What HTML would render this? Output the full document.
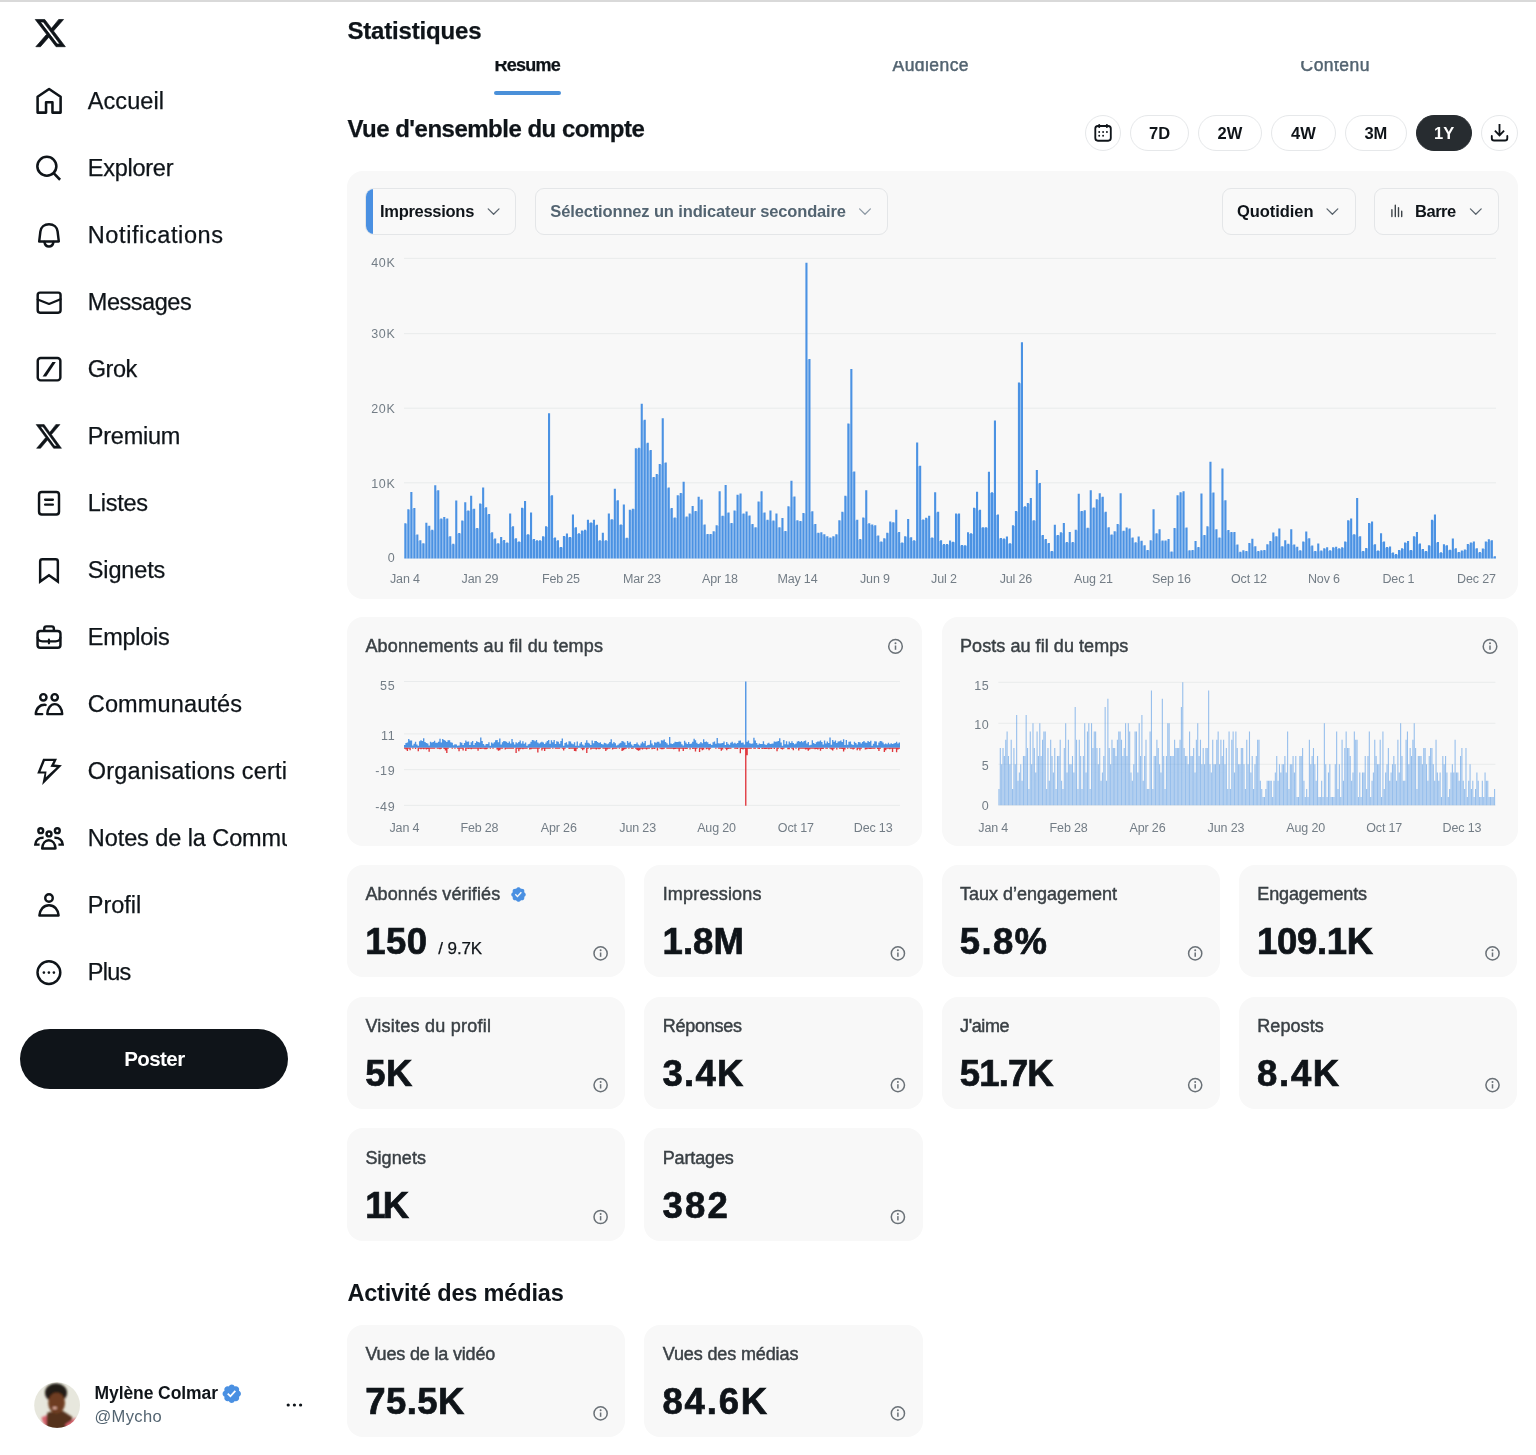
<!DOCTYPE html><html lang="fr"><head><meta charset="utf-8"><title>Statistiques</title><style>
html,body{margin:0;padding:0;background:#fff}
body{width:1536px;height:1455px;position:relative;overflow:hidden;will-change:transform;font-family:"Liberation Sans",sans-serif;color:#0f1419}
.t{position:absolute;white-space:nowrap;line-height:1}
.abs{position:absolute}
.card{position:absolute;background:#f8f8f8;border-radius:16px}
.dd{position:absolute;box-sizing:border-box;border:1px solid #e4e6e8;border-radius:9px;background:#f9f9f9}
.pill{position:absolute;box-sizing:border-box;border:1px solid #e6e8ea;border-radius:18px;background:#fff}
svg{position:absolute;left:0;top:0;overflow:visible}
.m{-webkit-text-stroke:0.45px currentColor}
.h{-webkit-text-stroke:0.7px currentColor}
.n{-webkit-text-stroke:0.25px currentColor}
</style></head><body>
<div class="abs" style="left:0;top:0;width:1536px;height:1.5px;background:#d9d9d9"></div>
<nav>
<div class="t n" style="left:87.80px;top:90.00px;font-size:23.5px;letter-spacing:0.056px;">Accueil</div>
<div class="t n" style="left:87.80px;top:157.00px;font-size:23.5px;letter-spacing:-0.259px;">Explorer</div>
<div class="t n" style="left:87.80px;top:224.00px;font-size:23.5px;letter-spacing:0.600px;">Notifications</div>
<div class="t n" style="left:87.80px;top:291.00px;font-size:23.5px;letter-spacing:-0.459px;">Messages</div>
<div class="t n" style="left:87.80px;top:358.00px;font-size:23.5px;letter-spacing:-0.457px;">Grok</div>
<div class="t n" style="left:87.80px;top:425.00px;font-size:23.5px;letter-spacing:-0.237px;">Premium</div>
<div class="t n" style="left:87.80px;top:492.00px;font-size:23.5px;letter-spacing:-0.216px;">Listes</div>
<div class="t n" style="left:87.80px;top:559.00px;font-size:23.5px;letter-spacing:-0.145px;">Signets</div>
<div class="t n" style="left:87.80px;top:626.00px;font-size:23.5px;letter-spacing:-0.265px;">Emplois</div>
<div class="t n" style="left:87.80px;top:693.00px;font-size:23.5px;letter-spacing:0.138px;">Communautés</div>
<div class="abs" style="left:80px;top:751.0px;width:207.3px;height:40px;overflow:hidden"><div class="t n" style="left:7.80px;top:9.00px;font-size:23.5px;letter-spacing:0.182px;">Organisations certifiées</div></div>
<div class="abs" style="left:80px;top:818.0px;width:207.3px;height:40px;overflow:hidden"><div class="t n" style="left:7.80px;top:9.00px;font-size:23.5px;letter-spacing:-0.080px;">Notes de la Communauté</div></div>
<div class="t n" style="left:87.80px;top:894.00px;font-size:23.5px;letter-spacing:-0.027px;">Profil</div>
<div class="t n" style="left:87.80px;top:961.00px;font-size:23.5px;letter-spacing:-0.769px;">Plus</div>
</nav>
<svg width="340" height="1455" viewBox="0 0 340 1455" fill="none" stroke="#0f1419" stroke-width="2.45" stroke-linejoin="round" stroke-linecap="round"><path transform="translate(33.5 16.35) scale(1.395)" d="M18.244 2.25h3.308l-7.227 8.26 8.502 11.24H16.17l-5.214-6.817L4.99 21.75H1.68l7.73-8.835L1.254 2.25H8.08l4.713 6.231zm-1.161 17.52h1.833L7.084 4.126H5.117z" fill="#0f1419" stroke="#0f1419" stroke-width="0.5" stroke-linejoin="miter"/><path transform="translate(34.65 421.8) scale(1.175 1.22)" d="M18.244 2.25h3.308l-7.227 8.26 8.502 11.24H16.17l-5.214-6.817L4.99 21.75H1.68l7.73-8.835L1.254 2.25H8.08l4.713 6.231zm-1.161 17.52h1.833L7.084 4.126H5.117z" fill="#0f1419" stroke="#0f1419" stroke-width="0.45" stroke-linejoin="miter"/><path stroke-width="2.55" d="M37.6 112.6V96.8L49.1 89 60.6 96.8V112.6H52.45V102.2H46.05V112.6Z"/><circle cx="46.85" cy="166.25" r="9.5" stroke-width="2.55"/><path stroke-width="2.55" stroke-linecap="butt" d="M53.4 172.8L60.1 179.75"/><path d="M39.2 241.4L40.4 231.5C40.9 227 44.4 224.2 49 224.2S57.1 227 57.6 231.5L58.8 241.4Z"/><path d="M44.4 242C44.9 244.8 46.6 246.5 48.95 246.5S53 244.8 53.5 242"/><rect x="37.7" y="292.6" width="22.85" height="20.05" rx="2.3"/><path stroke-width="2.2" d="M37.7 299.4L49.05 304 60.5 299.2"/><rect x="37.75" y="357.95" width="22.6" height="22.4" rx="2.9"/><path fill="#0f1419" stroke="none" d="M42.6 376.4H46.2L55.8 362H52.4Z"/><rect x="39.05" y="492.05" width="19.95" height="22.5" rx="2.7"/><path stroke-width="2.3" d="M45.1 499.75H52.9M45.1 504.7H52.9"/><path stroke-linejoin="miter" stroke-miterlimit="6" d="M40.15 581.6V561.4Q40.15 559.15 42.4 559.15H55.6Q57.85 559.15 57.85 561.4V581.6L49 575.3Z"/><rect x="37.55" y="631.05" width="22.9" height="16.7" rx="2.8"/><path d="M44.25 630.8V628.6Q44.25 626.35 46.5 626.35H51.6Q53.85 626.35 53.85 628.6V630.8"/><path stroke-width="2.2" d="M37.7 637.5Q37.9 641.3 42.5 641.3H55.5Q60.1 641.3 60.3 637.5M48.95 639.7V643.3"/><circle cx="43.35" cy="697.3" r="3.15"/><circle cx="54.7" cy="697.3" r="3.15"/><path d="M47.3 714.1C47.6 708.5 50.5 704.1 54.75 704.1S61.9 708.5 62.2 714.1Z"/><path d="M45.6 704.9C40 704.3 36.2 708 35.8 714.1H42.2"/><path fill="#0f1419" stroke="none" fill-rule="evenodd" d="M43.1 758.7H57L54.3 764.6 61.9 765.3 42.2 785 44.5 773.6H37.2ZM44.8 761.1H53.4L50.4 766.8 56.7 767.2 45.8 777.3 46.5 771.4H40.5Z"/><circle cx="49" cy="833.9" r="2.45"/><circle cx="40.75" cy="830.7" r="2.4"/><circle cx="57.3" cy="830.7" r="2.4"/><path d="M42.2 848.4C42.5 843.6 45.2 840.2 48.85 840.2S55.2 843.6 55.5 848.4Z"/><path stroke-linecap="butt" stroke-linejoin="miter" d="M43.6 837.7C38.6 837.4 35.6 840.4 35.3 844.6H39.6M54.4 837.7C59.4 837.4 62.4 840.4 62.7 844.6H58.4"/><circle cx="49" cy="898.05" r="3.75"/><path d="M39.4 915.45C39.9 909.5 43.6 905.15 49 905.15S58.1 909.5 58.6 915.45Z"/><circle cx="48.9" cy="972.6" r="11.4"/><g fill="#0f1419" stroke="none"><circle cx="43.9" cy="972.6" r="1.3"/><circle cx="48.9" cy="972.6" r="1.3"/><circle cx="53.9" cy="972.6" r="1.3"/></g><g fill="#0f1419" stroke="none"><circle cx="288.2" cy="1405" r="1.6"/><circle cx="294.4" cy="1405" r="1.6"/><circle cx="300.6" cy="1405" r="1.6"/></g></svg>
<div class="abs" style="left:20.3px;top:1029px;width:267.5px;height:59.5px;border-radius:30px;background:#0f1419"></div>
<div class="t" style="left:124.20px;top:1049.00px;font-size:20.5px;font-weight:700;color:#fff;letter-spacing:-0.559px;">Poster</div>
<svg width="60" height="60" viewBox="0 0 60 60" style="left:30px;top:1376px"><defs><clipPath id="av"><circle cx="27.1" cy="29.2" r="22.9"/></clipPath><filter id="bl" x="-20%" y="-20%" width="140%" height="140%"><feGaussianBlur stdDeviation="1"/></filter></defs><g clip-path="url(#av)"><rect x="0" y="0" width="60" height="60" fill="#e7e7dd"/><g filter="url(#bl)"><path d="M17.8 36.3L33 35 42.5 41.2 39.2 53H15.7L16.1 41.2Z" fill="#55301a"/><path d="M11.4 41.6L16.6 39.2V51L13 46.4Z" fill="#d8636e"/><path d="M35.1 48.4L46.4 41.2 44.4 48.4 37.2 53.5Z" fill="#d8636e"/><ellipse cx="26" cy="16.8" rx="11" ry="9.6" fill="#221a12"/><ellipse cx="26.6" cy="27" rx="8.4" ry="10.6" fill="#6e3d20"/><ellipse cx="24.8" cy="32" rx="2.2" ry="1.3" fill="#e6b3a3"/></g></g></svg>
<div class="t" style="left:94.50px;top:1385.00px;font-size:17.5px;font-weight:700;letter-spacing:-0.081px;">Mylène Colmar</div>
<div class="t" style="left:94.50px;top:1408.00px;font-size:16.5px;color:#536471;letter-spacing:0.372px;">@Mycho</div>
<svg width="21.5" height="21.5" viewBox="0 0 24 24" style="left:221.15px;top:1382.65px"><path d="M22.25 12c0-1.43-.88-2.67-2.19-3.34.46-1.39.2-2.9-.81-3.91s-2.52-1.27-3.91-.81c-.66-1.31-1.91-2.19-3.34-2.19s-2.67.88-3.33 2.19c-1.4-.46-2.91-.2-3.92.81s-1.26 2.52-.8 3.91c-1.31.67-2.2 1.91-2.2 3.34s.89 2.67 2.2 3.34c-.46 1.39-.21 2.9.8 3.91s2.52 1.26 3.91.81c.67 1.31 1.91 2.19 3.34 2.19s2.68-.88 3.34-2.19c1.39.45 2.9.2 3.91-.81s1.27-2.52.81-3.91c1.31-.67 2.19-1.91 2.19-3.34zm-11.71 4.2L6.8 12.46l1.41-1.42 2.26 2.26 4.8-5.23 1.47 1.36-6.2 6.77z" fill="#4a90e2"/></svg>
<main>
<div class="t n" style="left:347.40px;top:19.00px;font-size:24px;font-weight:700;letter-spacing:-0.176px;">Statistiques</div>
<div class="abs" style="left:340px;top:60.9px;width:1196px;height:24px;overflow:hidden">
<div class="t n" style="left:154.60px;top:-5.00px;font-size:18px;font-weight:700;letter-spacing:-0.788px;">Résumé</div>
<div class="t m" style="left:552.60px;top:-4.00px;font-size:17.5px;color:#536471;letter-spacing:0.432px;">Audience</div>
<div class="t m" style="left:960.60px;top:-4.00px;font-size:17.5px;color:#536471;letter-spacing:0.439px;">Contenu</div>
</div>
<div class="abs" style="left:494px;top:90.7px;width:67px;height:4.3px;border-radius:3px;background:#4a90d9"></div>
<div class="t n" style="left:347.40px;top:117.00px;font-size:24px;font-weight:700;letter-spacing:-0.499px;">Vue d'ensemble du compte</div>
<div class="pill" style="left:1085.1px;top:114.8px;width:36.3px;height:36.5px;border-radius:19px"></div>
<div class="pill" style="left:1130px;top:114.9px;width:59.0px;height:36.4px;"></div>
<div class="t" style="left:1148.96px;top:125.00px;font-size:16.5px;font-weight:700;">7D</div>
<div class="pill" style="left:1198.3px;top:114.9px;width:63.4px;height:36.4px;"></div>
<div class="t" style="left:1217.62px;top:125.00px;font-size:16.5px;font-weight:700;">2W</div>
<div class="pill" style="left:1271.2px;top:114.9px;width:64.6px;height:36.4px;"></div>
<div class="t" style="left:1291.12px;top:125.00px;font-size:16.5px;font-weight:700;">4W</div>
<div class="pill" style="left:1344.9px;top:114.9px;width:61.9px;height:36.4px;"></div>
<div class="t" style="left:1364.39px;top:125.00px;font-size:16.5px;font-weight:700;">3M</div>
<div class="pill" style="left:1415.9px;top:114.9px;width:56.4px;height:36.4px;background:#272c30;border-color:#272c30;"></div>
<div class="t" style="left:1434.01px;top:125.00px;font-size:16.5px;font-weight:700;color:#fff;">1Y</div>
<div class="pill" style="left:1481.4px;top:114.8px;width:36.3px;height:36.5px;border-radius:19px"></div>
<svg width="1536" height="300" viewBox="0 0 1536 300" fill="none" stroke="#0f1419" stroke-width="1.85" stroke-linejoin="round" stroke-linecap="round"><rect x="1095.3" y="126" width="15.5" height="14.7" rx="2.6"/><path stroke-width="2" d="M1099.2 124.9V127M1106.9 124.9V127"/><g fill="#0f1419" stroke="none"><circle cx="1099.2" cy="132" r="0.95"/><circle cx="1103.1" cy="132" r="0.95"/><circle cx="1106.9" cy="132" r="0.95"/><circle cx="1099.2" cy="135.8" r="0.95"/><circle cx="1103.1" cy="135.8" r="0.95"/></g><path stroke-linecap="butt" stroke-linejoin="miter" d="M1499.5 124V135M1494.9 130.7L1499.5 135.4 1504.1 130.7"/><path d="M1491.8 136V138.2Q1491.8 140.5 1494.1 140.5H1505Q1507.3 140.5 1507.3 138.2V136"/></svg>
<div class="card" style="left:347px;top:170.5px;width:1171px;height:428px"></div>
<div class="dd" style="left:365.2px;top:188.2px;width:151.2px;height:46.4px;overflow:hidden"><div class="abs" style="left:-1px;top:-1px;width:8.2px;height:49px;background:#4a90e2"></div></div>
<div class="t" style="left:380.00px;top:203.00px;font-size:16.5px;font-weight:700;letter-spacing:-0.290px;">Impressions</div>
<svg width="1536" height="300" viewBox="0 0 1536 300" fill="none" stroke="#59636c" stroke-width="1.25" stroke-linecap="round" stroke-linejoin="round"><path d="M488.20000000000005 208.9L493.6 214.3 499.0 208.9"/></svg>
<div class="dd" style="left:535.4px;top:188.2px;width:352.9px;height:46.4px;overflow:hidden"></div>
<div class="t" style="left:550.30px;top:203.00px;font-size:16.5px;font-weight:700;color:#536471;letter-spacing:-0.140px;">Sélectionnez un indicateur secondaire</div>
<svg width="1536" height="300" viewBox="0 0 1536 300" fill="none" stroke="#8d99a4" stroke-width="1.25" stroke-linecap="round" stroke-linejoin="round"><path d="M859.6 208.9L865 214.3 870.4 208.9"/></svg>
<div class="dd" style="left:1222.3px;top:188.2px;width:133.7px;height:46.4px;overflow:hidden"></div>
<div class="t" style="left:1236.90px;top:203.00px;font-size:16.5px;font-weight:700;letter-spacing:-0.036px;">Quotidien</div>
<svg width="1536" height="300" viewBox="0 0 1536 300" fill="none" stroke="#59636c" stroke-width="1.25" stroke-linecap="round" stroke-linejoin="round"><path d="M1327.0 208.9L1332.4 214.3 1337.8000000000002 208.9"/></svg>
<div class="dd" style="left:1374.3px;top:188.2px;width:124.4px;height:46.4px;overflow:hidden"></div>
<div class="t" style="left:1415.00px;top:203.00px;font-size:16.5px;font-weight:700;letter-spacing:-0.479px;">Barre</div>
<svg width="1536" height="300" viewBox="0 0 1536 300" fill="none" stroke="#59636c" stroke-width="1.25" stroke-linecap="round" stroke-linejoin="round"><path d="M1470.3999999999999 208.9L1475.8 214.3 1481.2 208.9"/></svg>
<svg width="1536" height="300" viewBox="0 0 1536 300" fill="none" stroke="#3e4449" stroke-width="1.4" stroke-linecap="round"><path d="M1391.9 209.8V216.5M1395.3 205.2V216.5M1398.5 207.7V216.5M1401.7 211.2V216.5"/></svg>
<svg width="1536" height="1455" viewBox="0 0 1536 1455"><rect x="404" y="257.9" width="1092" height="1" fill="#e9ebec"/><rect x="404" y="333.1" width="1092" height="1" fill="#e9ebec"/><rect x="404" y="407.7" width="1092" height="1" fill="#e9ebec"/><rect x="404" y="482.3" width="1092" height="1" fill="#e9ebec"/><rect x="404" y="557.3" width="1092" height="1" fill="#e9ebec"/><path d="M406.4 558.4V523.9h0.9V558.4zM409.4 558.4V509.9h0.9V558.4zM412.4 558.4V508.7h0.9V558.4zM415.4 558.4V535.1h0.9V558.4zM418.4 558.4V540.9h0.9V558.4zM421.4 558.4V543.8h0.9V558.4zM424.4 558.4V543.8h0.9V558.4zM427.4 558.4V526.3h0.9V558.4zM430.3 558.4V530.4h0.9V558.4zM433.3 558.4V530.4h0.9V558.4zM436.3 558.4V490.8h0.9V558.4zM439.3 558.4V519.2h0.9V558.4zM442.3 558.4V519.2h0.9V558.4zM445.3 558.4V519.2h0.9V558.4zM448.3 558.4V536.8h0.9V558.4zM451.3 558.4V544.4h0.9V558.4zM454.3 558.4V544.4h0.9V558.4zM457.3 558.4V533.7h0.9V558.4zM460.3 558.4V533.7h0.9V558.4zM463.3 558.4V521.0h0.9V558.4zM466.3 558.4V511.0h0.9V558.4zM469.3 558.4V511.0h0.9V558.4zM472.2 558.4V509.3h0.9V558.4zM475.2 558.4V528.6h0.9V558.4zM478.2 558.4V528.6h0.9V558.4zM481.2 558.4V504.0h0.9V558.4zM484.2 558.4V507.9h0.9V558.4zM487.2 558.4V514.5h0.9V558.4zM490.2 558.4V532.9h0.9V558.4zM493.2 558.4V539.2h0.9V558.4zM496.2 558.4V543.8h0.9V558.4zM499.2 558.4V543.8h0.9V558.4zM502.2 558.4V540.7h0.9V558.4zM505.2 558.4V543.0h0.9V558.4zM508.2 558.4V543.0h0.9V558.4zM511.2 558.4V526.9h0.9V558.4zM514.1 558.4V538.8h0.9V558.4zM517.1 558.4V542.1h0.9V558.4zM520.1 558.4V542.1h0.9V558.4zM523.1 558.4V508.3h0.9V558.4zM526.1 558.4V534.8h0.9V558.4zM529.1 558.4V534.8h0.9V558.4zM532.1 558.4V539.5h0.9V558.4zM535.1 558.4V540.9h0.9V558.4zM538.1 558.4V540.9h0.9V558.4zM541.1 558.4V540.9h0.9V558.4zM544.1 558.4V536.8h0.9V558.4zM547.1 558.4V526.9h0.9V558.4zM550.1 558.4V495.8h0.9V558.4zM553.1 558.4V538.0h0.9V558.4zM556.1 558.4V540.9h0.9V558.4zM559.0 558.4V547.6h0.9V558.4zM562.0 558.4V547.6h0.9V558.4zM565.0 558.4V536.6h0.9V558.4zM568.0 558.4V537.6h0.9V558.4zM571.0 558.4V537.6h0.9V558.4zM574.0 558.4V527.8h0.9V558.4zM577.0 558.4V533.9h0.9V558.4zM580.0 558.4V533.9h0.9V558.4zM583.0 558.4V531.0h0.9V558.4zM586.0 558.4V530.4h0.9V558.4zM589.0 558.4V523.1h0.9V558.4zM592.0 558.4V523.1h0.9V558.4zM595.0 558.4V525.4h0.9V558.4zM598.0 558.4V540.9h0.9V558.4zM600.9 558.4V540.9h0.9V558.4zM603.9 558.4V540.9h0.9V558.4zM606.9 558.4V540.9h0.9V558.4zM609.9 558.4V519.8h0.9V558.4zM612.9 558.4V519.8h0.9V558.4zM615.9 558.4V500.8h0.9V558.4zM618.9 558.4V525.1h0.9V558.4zM621.9 558.4V525.1h0.9V558.4zM624.9 558.4V538.3h0.9V558.4zM627.9 558.4V538.3h0.9V558.4zM630.9 558.4V510.4h0.9V558.4zM633.9 558.4V509.3h0.9V558.4zM636.9 558.4V448.9h0.9V558.4zM639.9 558.4V448.3h0.9V558.4zM642.8 558.4V420.4h0.9V558.4zM645.8 558.4V443.4h0.9V558.4zM648.8 558.4V450.7h0.9V558.4zM651.8 558.4V477.6h0.9V558.4zM654.8 558.4V477.6h0.9V558.4zM657.8 558.4V474.7h0.9V558.4zM660.8 558.4V464.7h0.9V558.4zM663.8 558.4V463.0h0.9V558.4zM666.8 558.4V488.2h0.9V558.4zM669.8 558.4V508.7h0.9V558.4zM672.8 558.4V518.1h0.9V558.4zM675.8 558.4V518.1h0.9V558.4zM678.8 558.4V495.8h0.9V558.4zM681.8 558.4V493.5h0.9V558.4zM684.7 558.4V517.2h0.9V558.4zM687.7 558.4V517.2h0.9V558.4zM690.7 558.4V514.2h0.9V558.4zM693.7 558.4V511.6h0.9V558.4zM696.7 558.4V511.6h0.9V558.4zM699.7 558.4V500.1h0.9V558.4zM702.7 558.4V525.1h0.9V558.4zM705.7 558.4V534.5h0.9V558.4zM708.7 558.4V534.5h0.9V558.4zM711.7 558.4V534.5h0.9V558.4zM714.7 558.4V531.8h0.9V558.4zM717.7 558.4V525.9h0.9V558.4zM720.7 558.4V516.3h0.9V558.4zM723.7 558.4V516.3h0.9V558.4zM726.7 558.4V513.1h0.9V558.4zM729.6 558.4V523.6h0.9V558.4zM732.6 558.4V523.6h0.9V558.4zM735.6 558.4V511.0h0.9V558.4zM738.6 558.4V495.4h0.9V558.4zM741.6 558.4V514.0h0.9V558.4zM744.6 558.4V514.0h0.9V558.4zM747.6 558.4V516.1h0.9V558.4zM750.6 558.4V524.5h0.9V558.4zM753.6 558.4V527.8h0.9V558.4zM756.6 558.4V527.8h0.9V558.4zM759.6 558.4V502.0h0.9V558.4zM762.6 558.4V513.1h0.9V558.4zM765.6 558.4V520.4h0.9V558.4zM768.6 558.4V520.4h0.9V558.4zM771.5 558.4V521.2h0.9V558.4zM774.5 558.4V521.2h0.9V558.4zM777.5 558.4V527.8h0.9V558.4zM780.5 558.4V527.8h0.9V558.4zM783.5 558.4V531.5h0.9V558.4zM786.5 558.4V531.5h0.9V558.4zM789.5 558.4V506.9h0.9V558.4zM792.5 558.4V497.0h0.9V558.4zM795.5 558.4V520.8h0.9V558.4zM798.5 558.4V521.6h0.9V558.4zM801.5 558.4V521.6h0.9V558.4zM804.5 558.4V513.7h0.9V558.4zM807.5 558.4V359.7h0.9V558.4zM810.5 558.4V511.9h0.9V558.4zM813.4 558.4V524.5h0.9V558.4zM816.4 558.4V533.3h0.9V558.4zM819.4 558.4V533.3h0.9V558.4zM822.4 558.4V534.8h0.9V558.4zM825.4 558.4V536.8h0.9V558.4zM828.4 558.4V538.0h0.9V558.4zM831.4 558.4V538.0h0.9V558.4zM834.4 558.4V536.8h0.9V558.4zM837.4 558.4V534.8h0.9V558.4zM840.4 558.4V520.8h0.9V558.4zM843.4 558.4V512.4h0.9V558.4zM846.4 558.4V496.4h0.9V558.4zM849.4 558.4V424.1h0.9V558.4zM852.4 558.4V472.0h0.9V558.4zM855.4 558.4V520.4h0.9V558.4zM858.3 558.4V539.7h0.9V558.4zM861.3 558.4V539.7h0.9V558.4zM864.3 558.4V518.1h0.9V558.4zM867.3 558.4V523.9h0.9V558.4zM870.3 558.4V525.1h0.9V558.4zM873.3 558.4V525.9h0.9V558.4zM876.3 558.4V536.0h0.9V558.4zM879.3 558.4V542.1h0.9V558.4zM882.3 558.4V542.1h0.9V558.4zM885.3 558.4V538.8h0.9V558.4zM888.3 558.4V533.3h0.9V558.4zM891.3 558.4V522.8h0.9V558.4zM894.3 558.4V522.8h0.9V558.4zM897.3 558.4V532.7h0.9V558.4zM900.2 558.4V543.0h0.9V558.4zM903.2 558.4V543.0h0.9V558.4zM906.2 558.4V536.8h0.9V558.4zM909.2 558.4V537.8h0.9V558.4zM912.2 558.4V540.9h0.9V558.4zM915.2 558.4V540.9h0.9V558.4zM918.2 558.4V466.3h0.9V558.4zM921.2 558.4V520.1h0.9V558.4zM924.2 558.4V520.1h0.9V558.4zM927.2 558.4V518.4h0.9V558.4zM930.2 558.4V538.0h0.9V558.4zM933.2 558.4V538.0h0.9V558.4zM936.2 558.4V512.4h0.9V558.4zM939.2 558.4V540.9h0.9V558.4zM942.1 558.4V544.7h0.9V558.4zM945.1 558.4V544.7h0.9V558.4zM948.1 558.4V544.7h0.9V558.4zM951.1 558.4V542.3h0.9V558.4zM954.1 558.4V542.3h0.9V558.4zM957.1 558.4V514.2h0.9V558.4zM960.1 558.4V545.6h0.9V558.4zM963.1 558.4V545.8h0.9V558.4zM966.1 558.4V545.8h0.9V558.4zM969.1 558.4V533.9h0.9V558.4zM972.1 558.4V533.9h0.9V558.4zM975.1 558.4V508.3h0.9V558.4zM978.1 558.4V510.4h0.9V558.4zM981.1 558.4V527.8h0.9V558.4zM984.0 558.4V527.8h0.9V558.4zM987.0 558.4V527.8h0.9V558.4zM990.0 558.4V492.9h0.9V558.4zM993.0 558.4V492.9h0.9V558.4zM996.0 558.4V515.1h0.9V558.4zM999.0 558.4V538.6h0.9V558.4zM1002.0 558.4V539.2h0.9V558.4zM1005.0 558.4V539.2h0.9V558.4zM1008.0 558.4V543.8h0.9V558.4zM1011.0 558.4V543.8h0.9V558.4zM1014.0 558.4V525.9h0.9V558.4zM1017.0 558.4V511.6h0.9V558.4zM1020.0 558.4V383.2h0.9V558.4zM1023.0 558.4V506.9h0.9V558.4zM1026.0 558.4V506.9h0.9V558.4zM1028.9 558.4V503.7h0.9V558.4zM1031.9 558.4V520.8h0.9V558.4zM1034.9 558.4V520.8h0.9V558.4zM1037.9 558.4V483.7h0.9V558.4zM1040.9 558.4V535.6h0.9V558.4zM1043.9 558.4V539.5h0.9V558.4zM1046.9 558.4V543.5h0.9V558.4zM1049.9 558.4V551.5h0.9V558.4zM1052.9 558.4V551.5h0.9V558.4zM1055.9 558.4V535.6h0.9V558.4zM1058.9 558.4V535.6h0.9V558.4zM1061.9 558.4V532.9h0.9V558.4zM1064.9 558.4V542.7h0.9V558.4zM1067.9 558.4V542.7h0.9V558.4zM1070.8 558.4V542.7h0.9V558.4zM1073.8 558.4V542.7h0.9V558.4zM1076.8 558.4V530.4h0.9V558.4zM1079.8 558.4V511.6h0.9V558.4zM1082.8 558.4V511.6h0.9V558.4zM1085.8 558.4V528.3h0.9V558.4zM1088.8 558.4V528.3h0.9V558.4zM1091.8 558.4V508.1h0.9V558.4zM1094.8 558.4V508.1h0.9V558.4zM1097.8 558.4V499.9h0.9V558.4zM1100.8 558.4V497.3h0.9V558.4zM1103.8 558.4V512.4h0.9V558.4zM1106.8 558.4V527.8h0.9V558.4zM1109.8 558.4V535.1h0.9V558.4zM1112.7 558.4V535.1h0.9V558.4zM1115.7 558.4V531.8h0.9V558.4zM1118.7 558.4V524.7h0.9V558.4zM1121.7 558.4V531.3h0.9V558.4zM1124.7 558.4V531.3h0.9V558.4zM1127.7 558.4V529.2h0.9V558.4zM1130.7 558.4V538.0h0.9V558.4zM1133.7 558.4V542.9h0.9V558.4zM1136.7 558.4V542.9h0.9V558.4zM1139.7 558.4V541.3h0.9V558.4zM1142.7 558.4V545.8h0.9V558.4zM1145.7 558.4V550.5h0.9V558.4zM1148.7 558.4V550.5h0.9V558.4zM1151.7 558.4V540.9h0.9V558.4zM1154.6 558.4V533.9h0.9V558.4zM1157.6 558.4V533.9h0.9V558.4zM1160.6 558.4V541.2h0.9V558.4zM1163.6 558.4V541.2h0.9V558.4zM1166.6 558.4V541.2h0.9V558.4zM1169.6 558.4V552.1h0.9V558.4zM1172.6 558.4V552.1h0.9V558.4zM1175.6 558.4V528.6h0.9V558.4zM1178.6 558.4V495.8h0.9V558.4zM1181.6 558.4V492.9h0.9V558.4zM1184.6 558.4V528.0h0.9V558.4zM1187.6 558.4V550.9h0.9V558.4zM1190.6 558.4V550.9h0.9V558.4zM1193.6 558.4V550.5h0.9V558.4zM1196.6 558.4V547.7h0.9V558.4zM1199.5 558.4V547.7h0.9V558.4zM1202.5 558.4V535.6h0.9V558.4zM1205.5 558.4V535.6h0.9V558.4zM1208.5 558.4V526.9h0.9V558.4zM1211.5 558.4V493.1h0.9V558.4zM1214.5 558.4V529.8h0.9V558.4zM1217.5 558.4V538.0h0.9V558.4zM1220.5 558.4V538.0h0.9V558.4zM1223.5 558.4V500.8h0.9V558.4zM1226.5 558.4V530.7h0.9V558.4zM1229.5 558.4V532.7h0.9V558.4zM1232.5 558.4V532.7h0.9V558.4zM1235.5 558.4V545.0h0.9V558.4zM1238.5 558.4V552.4h0.9V558.4zM1241.4 558.4V552.4h0.9V558.4zM1244.4 558.4V551.5h0.9V558.4zM1247.4 558.4V551.5h0.9V558.4zM1250.4 558.4V543.5h0.9V558.4zM1253.4 558.4V546.8h0.9V558.4zM1256.4 558.4V551.7h0.9V558.4zM1259.4 558.4V551.7h0.9V558.4zM1262.4 558.4V550.9h0.9V558.4zM1265.4 558.4V550.5h0.9V558.4zM1268.4 558.4V544.8h0.9V558.4zM1271.4 558.4V541.7h0.9V558.4zM1274.4 558.4V536.8h0.9V558.4zM1277.4 558.4V536.8h0.9V558.4zM1280.4 558.4V546.8h0.9V558.4zM1283.3 558.4V546.8h0.9V558.4zM1286.3 558.4V544.4h0.9V558.4zM1289.3 558.4V544.4h0.9V558.4zM1292.3 558.4V545.0h0.9V558.4zM1295.3 558.4V547.4h0.9V558.4zM1298.3 558.4V550.9h0.9V558.4zM1301.3 558.4V550.9h0.9V558.4zM1304.3 558.4V542.1h0.9V558.4zM1307.3 558.4V538.8h0.9V558.4zM1310.3 558.4V546.2h0.9V558.4zM1313.3 558.4V551.5h0.9V558.4zM1316.3 558.4V551.5h0.9V558.4zM1319.3 558.4V551.2h0.9V558.4zM1322.3 558.4V551.2h0.9V558.4zM1325.3 558.4V548.9h0.9V558.4zM1328.2 558.4V550.9h0.9V558.4zM1331.2 558.4V550.9h0.9V558.4zM1334.2 558.4V547.9h0.9V558.4zM1337.2 558.4V548.9h0.9V558.4zM1340.2 558.4V548.9h0.9V558.4zM1343.2 558.4V547.9h0.9V558.4zM1346.2 558.4V542.1h0.9V558.4zM1349.2 558.4V520.8h0.9V558.4zM1352.2 558.4V534.8h0.9V558.4zM1355.2 558.4V534.8h0.9V558.4zM1358.2 558.4V536.8h0.9V558.4zM1361.2 558.4V551.5h0.9V558.4zM1364.2 558.4V551.5h0.9V558.4zM1367.2 558.4V548.5h0.9V558.4zM1370.1 558.4V523.6h0.9V558.4zM1373.1 558.4V544.8h0.9V558.4zM1376.1 558.4V551.1h0.9V558.4zM1379.1 558.4V551.1h0.9V558.4zM1382.1 558.4V542.1h0.9V558.4zM1385.1 558.4V547.7h0.9V558.4zM1388.1 558.4V547.7h0.9V558.4zM1391.1 558.4V553.0h0.9V558.4zM1394.1 558.4V554.7h0.9V558.4zM1397.1 558.4V554.7h0.9V558.4zM1400.1 558.4V550.5h0.9V558.4zM1403.1 558.4V548.9h0.9V558.4zM1406.1 558.4V543.0h0.9V558.4zM1409.1 558.4V550.5h0.9V558.4zM1412.0 558.4V550.5h0.9V558.4zM1415.0 558.4V536.8h0.9V558.4zM1418.0 558.4V544.2h0.9V558.4zM1421.0 558.4V549.5h0.9V558.4zM1424.0 558.4V551.5h0.9V558.4zM1427.0 558.4V551.5h0.9V558.4zM1430.0 558.4V545.8h0.9V558.4zM1433.0 558.4V520.4h0.9V558.4zM1436.0 558.4V542.7h0.9V558.4zM1439.0 558.4V552.9h0.9V558.4zM1442.0 558.4V552.9h0.9V558.4zM1445.0 558.4V545.8h0.9V558.4zM1448.0 558.4V550.3h0.9V558.4zM1451.0 558.4V550.3h0.9V558.4zM1453.9 558.4V548.9h0.9V558.4zM1456.9 558.4V552.6h0.9V558.4zM1459.9 558.4V552.6h0.9V558.4zM1462.9 558.4V551.1h0.9V558.4zM1465.9 558.4V550.1h0.9V558.4zM1468.9 558.4V544.7h0.9V558.4zM1471.9 558.4V543.1h0.9V558.4zM1474.9 558.4V548.8h0.9V558.4zM1477.9 558.4V552.7h0.9V558.4zM1480.9 558.4V552.7h0.9V558.4zM1483.9 558.4V549.0h0.9V558.4zM1486.9 558.4V542.1h0.9V558.4zM1489.9 558.4V540.8h0.9V558.4zM1492.9 558.4V556.8h0.9V558.4z" fill="#8dbbf0"/><path d="M404.3 558.4V523.3h2.1V558.4zM407.3 558.4V509.3h2.1V558.4zM410.3 558.4V492.0h2.1V558.4zM413.3 558.4V508.1h2.1V558.4zM416.3 558.4V534.5h2.1V558.4zM419.3 558.4V540.3h2.1V558.4zM422.3 558.4V543.2h2.1V558.4zM425.3 558.4V522.7h2.1V558.4zM428.2 558.4V525.7h2.1V558.4zM431.2 558.4V529.8h2.1V558.4zM434.2 558.4V485.2h2.1V558.4zM437.2 558.4V490.2h2.1V558.4zM440.2 558.4V518.6h2.1V558.4zM443.2 558.4V517.1h2.1V558.4zM446.2 558.4V518.6h2.1V558.4zM449.2 558.4V536.2h2.1V558.4zM452.2 558.4V543.8h2.1V558.4zM455.2 558.4V500.5h2.1V558.4zM458.2 558.4V533.1h2.1V558.4zM461.2 558.4V520.4h2.1V558.4zM464.2 558.4V502.2h2.1V558.4zM467.2 558.4V510.4h2.1V558.4zM470.1 558.4V495.8h2.1V558.4zM473.1 558.4V508.7h2.1V558.4zM476.1 558.4V528.0h2.1V558.4zM479.1 558.4V503.4h2.1V558.4zM482.1 558.4V487.6h2.1V558.4zM485.1 558.4V507.3h2.1V558.4zM488.1 558.4V513.9h2.1V558.4zM491.1 558.4V532.3h2.1V558.4zM494.1 558.4V538.6h2.1V558.4zM497.1 558.4V543.2h2.1V558.4zM500.1 558.4V537.0h2.1V558.4zM503.1 558.4V540.1h2.1V558.4zM506.1 558.4V542.4h2.1V558.4zM509.1 558.4V513.4h2.1V558.4zM512.0 558.4V526.3h2.1V558.4zM515.0 558.4V538.2h2.1V558.4zM518.0 558.4V541.5h2.1V558.4zM521.0 558.4V507.7h2.1V558.4zM524.0 558.4V501.1h2.1V558.4zM527.0 558.4V534.2h2.1V558.4zM530.0 558.4V512.5h2.1V558.4zM533.0 558.4V538.9h2.1V558.4zM536.0 558.4V540.3h2.1V558.4zM539.0 558.4V540.3h2.1V558.4zM542.0 558.4V536.2h2.1V558.4zM545.0 558.4V526.3h2.1V558.4zM548.0 558.4V413.2h2.1V558.4zM551.0 558.4V495.2h2.1V558.4zM554.0 558.4V537.4h2.1V558.4zM556.9 558.4V540.3h2.1V558.4zM559.9 558.4V547.0h2.1V558.4zM562.9 558.4V536.0h2.1V558.4zM565.9 558.4V533.5h2.1V558.4zM568.9 558.4V537.0h2.1V558.4zM571.9 558.4V514.5h2.1V558.4zM574.9 558.4V527.2h2.1V558.4zM577.9 558.4V533.3h2.1V558.4zM580.9 558.4V530.4h2.1V558.4zM583.9 558.4V529.8h2.1V558.4zM586.9 558.4V519.8h2.1V558.4zM589.9 558.4V522.5h2.1V558.4zM592.9 558.4V519.8h2.1V558.4zM595.9 558.4V524.8h2.1V558.4zM598.8 558.4V540.3h2.1V558.4zM601.8 558.4V532.7h2.1V558.4zM604.8 558.4V540.3h2.1V558.4zM607.8 558.4V513.4h2.1V558.4zM610.8 558.4V519.2h2.1V558.4zM613.8 558.4V488.8h2.1V558.4zM616.8 558.4V500.2h2.1V558.4zM619.8 558.4V524.5h2.1V558.4zM622.8 558.4V504.6h2.1V558.4zM625.8 558.4V537.7h2.1V558.4zM628.8 558.4V509.8h2.1V558.4zM631.8 558.4V508.7h2.1V558.4zM634.8 558.4V448.3h2.1V558.4zM637.8 558.4V447.7h2.1V558.4zM640.7 558.4V403.8h2.1V558.4zM643.7 558.4V419.8h2.1V558.4zM646.7 558.4V442.8h2.1V558.4zM649.7 558.4V450.1h2.1V558.4zM652.7 558.4V477.0h2.1V558.4zM655.7 558.4V474.1h2.1V558.4zM658.7 558.4V464.1h2.1V558.4zM661.7 558.4V418.2h2.1V558.4zM664.7 558.4V462.4h2.1V558.4zM667.7 558.4V487.6h2.1V558.4zM670.7 558.4V508.1h2.1V558.4zM673.7 558.4V517.5h2.1V558.4zM676.7 558.4V495.2h2.1V558.4zM679.7 558.4V492.9h2.1V558.4zM682.6 558.4V481.7h2.1V558.4zM685.6 558.4V516.6h2.1V558.4zM688.6 558.4V513.6h2.1V558.4zM691.6 558.4V506.1h2.1V558.4zM694.6 558.4V511.0h2.1V558.4zM697.6 558.4V496.7h2.1V558.4zM700.6 558.4V499.5h2.1V558.4zM703.6 558.4V524.5h2.1V558.4zM706.6 558.4V533.9h2.1V558.4zM709.6 558.4V533.9h2.1V558.4zM712.6 558.4V531.2h2.1V558.4zM715.6 558.4V525.3h2.1V558.4zM718.6 558.4V491.3h2.1V558.4zM721.6 558.4V515.7h2.1V558.4zM724.6 558.4V485.0h2.1V558.4zM727.5 558.4V512.5h2.1V558.4zM730.5 558.4V523.0h2.1V558.4zM733.5 558.4V510.4h2.1V558.4zM736.5 558.4V494.8h2.1V558.4zM739.5 558.4V493.4h2.1V558.4zM742.5 558.4V513.4h2.1V558.4zM745.5 558.4V511.6h2.1V558.4zM748.5 558.4V515.5h2.1V558.4zM751.5 558.4V523.9h2.1V558.4zM754.5 558.4V527.2h2.1V558.4zM757.5 558.4V501.4h2.1V558.4zM760.5 558.4V491.3h2.1V558.4zM763.5 558.4V512.5h2.1V558.4zM766.5 558.4V519.8h2.1V558.4zM769.4 558.4V510.4h2.1V558.4zM772.4 558.4V520.6h2.1V558.4zM775.4 558.4V513.6h2.1V558.4zM778.4 558.4V527.2h2.1V558.4zM781.4 558.4V518.1h2.1V558.4zM784.4 558.4V530.9h2.1V558.4zM787.4 558.4V506.3h2.1V558.4zM790.4 558.4V480.8h2.1V558.4zM793.4 558.4V496.4h2.1V558.4zM796.4 558.4V520.2h2.1V558.4zM799.4 558.4V521.0h2.1V558.4zM802.4 558.4V513.1h2.1V558.4zM805.4 558.4V262.7h2.1V558.4zM808.4 558.4V359.1h2.1V558.4zM811.3 558.4V511.3h2.1V558.4zM814.3 558.4V523.9h2.1V558.4zM817.3 558.4V532.7h2.1V558.4zM820.3 558.4V532.3h2.1V558.4zM823.3 558.4V534.2h2.1V558.4zM826.3 558.4V536.2h2.1V558.4zM829.3 558.4V537.4h2.1V558.4zM832.3 558.4V536.2h2.1V558.4zM835.3 558.4V534.2h2.1V558.4zM838.3 558.4V520.2h2.1V558.4zM841.3 558.4V511.8h2.1V558.4zM844.3 558.4V495.8h2.1V558.4zM847.3 558.4V423.5h2.1V558.4zM850.3 558.4V368.9h2.1V558.4zM853.2 558.4V471.4h2.1V558.4zM856.2 558.4V519.8h2.1V558.4zM859.2 558.4V539.1h2.1V558.4zM862.2 558.4V517.5h2.1V558.4zM865.2 558.4V490.2h2.1V558.4zM868.2 558.4V523.3h2.1V558.4zM871.2 558.4V524.5h2.1V558.4zM874.2 558.4V525.3h2.1V558.4zM877.2 558.4V535.4h2.1V558.4zM880.2 558.4V541.5h2.1V558.4zM883.2 558.4V538.2h2.1V558.4zM886.2 558.4V532.7h2.1V558.4zM889.2 558.4V521.6h2.1V558.4zM892.2 558.4V522.2h2.1V558.4zM895.2 558.4V509.8h2.1V558.4zM898.1 558.4V532.1h2.1V558.4zM901.1 558.4V542.4h2.1V558.4zM904.1 558.4V536.2h2.1V558.4zM907.1 558.4V518.9h2.1V558.4zM910.1 558.4V537.2h2.1V558.4zM913.1 558.4V540.3h2.1V558.4zM916.1 558.4V442.5h2.1V558.4zM919.1 558.4V465.7h2.1V558.4zM922.1 558.4V519.5h2.1V558.4zM925.1 558.4V517.8h2.1V558.4zM928.1 558.4V515.7h2.1V558.4zM931.1 558.4V537.4h2.1V558.4zM934.1 558.4V492.3h2.1V558.4zM937.1 558.4V511.8h2.1V558.4zM940.0 558.4V540.3h2.1V558.4zM943.0 558.4V544.1h2.1V558.4zM946.0 558.4V544.1h2.1V558.4zM949.0 558.4V540.6h2.1V558.4zM952.0 558.4V541.7h2.1V558.4zM955.0 558.4V513.6h2.1V558.4zM958.0 558.4V513.6h2.1V558.4zM961.0 558.4V545.0h2.1V558.4zM964.0 558.4V545.2h2.1V558.4zM967.0 558.4V532.3h2.1V558.4zM970.0 558.4V533.3h2.1V558.4zM973.0 558.4V507.7h2.1V558.4zM976.0 558.4V491.7h2.1V558.4zM979.0 558.4V509.8h2.1V558.4zM981.9 558.4V527.2h2.1V558.4zM984.9 558.4V527.2h2.1V558.4zM987.9 558.4V471.8h2.1V558.4zM990.9 558.4V492.3h2.1V558.4zM993.9 558.4V420.5h2.1V558.4zM996.9 558.4V514.5h2.1V558.4zM999.9 558.4V538.0h2.1V558.4zM1002.9 558.4V538.6h2.1V558.4zM1005.9 558.4V536.5h2.1V558.4zM1008.9 558.4V543.2h2.1V558.4zM1011.9 558.4V525.3h2.1V558.4zM1014.9 558.4V511.0h2.1V558.4zM1017.9 558.4V382.6h2.1V558.4zM1020.9 558.4V342.3h2.1V558.4zM1023.9 558.4V506.3h2.1V558.4zM1026.8 558.4V503.1h2.1V558.4zM1029.8 558.4V498.1h2.1V558.4zM1032.8 558.4V520.2h2.1V558.4zM1035.8 558.4V470.0h2.1V558.4zM1038.8 558.4V483.1h2.1V558.4zM1041.8 558.4V535.0h2.1V558.4zM1044.8 558.4V538.9h2.1V558.4zM1047.8 558.4V542.9h2.1V558.4zM1050.8 558.4V550.9h2.1V558.4zM1053.8 558.4V524.8h2.1V558.4zM1056.8 558.4V535.0h2.1V558.4zM1059.8 558.4V532.3h2.1V558.4zM1062.8 558.4V523.0h2.1V558.4zM1065.8 558.4V542.1h2.1V558.4zM1068.7 558.4V532.1h2.1V558.4zM1071.7 558.4V542.1h2.1V558.4zM1074.7 558.4V529.8h2.1V558.4zM1077.7 558.4V493.8h2.1V558.4zM1080.7 558.4V511.0h2.1V558.4zM1083.7 558.4V510.2h2.1V558.4zM1086.7 558.4V527.7h2.1V558.4zM1089.7 558.4V490.3h2.1V558.4zM1092.7 558.4V507.5h2.1V558.4zM1095.7 558.4V499.3h2.1V558.4zM1098.7 558.4V493.2h2.1V558.4zM1101.7 558.4V496.7h2.1V558.4zM1104.7 558.4V511.8h2.1V558.4zM1107.7 558.4V527.2h2.1V558.4zM1110.6 558.4V534.5h2.1V558.4zM1113.6 558.4V531.2h2.1V558.4zM1116.6 558.4V524.1h2.1V558.4zM1119.6 558.4V493.2h2.1V558.4zM1122.6 558.4V530.7h2.1V558.4zM1125.6 558.4V527.4h2.1V558.4zM1128.6 558.4V528.6h2.1V558.4zM1131.6 558.4V537.4h2.1V558.4zM1134.6 558.4V542.3h2.1V558.4zM1137.6 558.4V536.6h2.1V558.4zM1140.6 558.4V540.7h2.1V558.4zM1143.6 558.4V545.2h2.1V558.4zM1146.6 558.4V549.9h2.1V558.4zM1149.6 558.4V540.3h2.1V558.4zM1152.5 558.4V509.3h2.1V558.4zM1155.5 558.4V533.3h2.1V558.4zM1158.5 558.4V529.2h2.1V558.4zM1161.5 558.4V540.6h2.1V558.4zM1164.5 558.4V540.6h2.1V558.4zM1167.5 558.4V539.1h2.1V558.4zM1170.5 558.4V551.5h2.1V558.4zM1173.5 558.4V528.0h2.1V558.4zM1176.5 558.4V495.2h2.1V558.4zM1179.5 558.4V492.3h2.1V558.4zM1182.5 558.4V491.3h2.1V558.4zM1185.5 558.4V527.4h2.1V558.4zM1188.5 558.4V550.3h2.1V558.4zM1191.5 558.4V549.9h2.1V558.4zM1194.5 558.4V540.9h2.1V558.4zM1197.4 558.4V547.1h2.1V558.4zM1200.4 558.4V493.4h2.1V558.4zM1203.4 558.4V535.0h2.1V558.4zM1206.4 558.4V526.3h2.1V558.4zM1209.4 558.4V461.8h2.1V558.4zM1212.4 558.4V492.5h2.1V558.4zM1215.4 558.4V529.2h2.1V558.4zM1218.4 558.4V537.4h2.1V558.4zM1221.4 558.4V468.5h2.1V558.4zM1224.4 558.4V500.2h2.1V558.4zM1227.4 558.4V530.1h2.1V558.4zM1230.4 558.4V532.1h2.1V558.4zM1233.4 558.4V532.1h2.1V558.4zM1236.4 558.4V544.4h2.1V558.4zM1239.3 558.4V551.8h2.1V558.4zM1242.3 558.4V550.3h2.1V558.4zM1245.3 558.4V550.9h2.1V558.4zM1248.3 558.4V542.9h2.1V558.4zM1251.3 558.4V538.8h2.1V558.4zM1254.3 558.4V546.2h2.1V558.4zM1257.3 558.4V551.1h2.1V558.4zM1260.3 558.4V550.3h2.1V558.4zM1263.3 558.4V549.9h2.1V558.4zM1266.3 558.4V544.2h2.1V558.4zM1269.3 558.4V541.1h2.1V558.4zM1272.3 558.4V532.5h2.1V558.4zM1275.3 558.4V536.2h2.1V558.4zM1278.3 558.4V528.4h2.1V558.4zM1281.2 558.4V546.2h2.1V558.4zM1284.2 558.4V540.3h2.1V558.4zM1287.2 558.4V543.8h2.1V558.4zM1290.2 558.4V529.2h2.1V558.4zM1293.2 558.4V544.4h2.1V558.4zM1296.2 558.4V546.8h2.1V558.4zM1299.2 558.4V550.3h2.1V558.4zM1302.2 558.4V541.5h2.1V558.4zM1305.2 558.4V531.5h2.1V558.4zM1308.2 558.4V538.2h2.1V558.4zM1311.2 558.4V545.6h2.1V558.4zM1314.2 558.4V550.9h2.1V558.4zM1317.2 558.4V543.6h2.1V558.4zM1320.2 558.4V550.6h2.1V558.4zM1323.2 558.4V548.3h2.1V558.4zM1326.1 558.4V547.3h2.1V558.4zM1329.1 558.4V550.3h2.1V558.4zM1332.1 558.4V547.3h2.1V558.4zM1335.1 558.4V546.8h2.1V558.4zM1338.1 558.4V548.3h2.1V558.4zM1341.1 558.4V547.3h2.1V558.4zM1344.1 558.4V541.5h2.1V558.4zM1347.1 558.4V520.2h2.1V558.4zM1350.1 558.4V518.6h2.1V558.4zM1353.1 558.4V534.2h2.1V558.4zM1356.1 558.4V498.1h2.1V558.4zM1359.1 558.4V536.2h2.1V558.4zM1362.1 558.4V550.9h2.1V558.4zM1365.1 558.4V547.9h2.1V558.4zM1368.0 558.4V523.0h2.1V558.4zM1371.0 558.4V521.6h2.1V558.4zM1374.0 558.4V544.2h2.1V558.4zM1377.0 558.4V550.5h2.1V558.4zM1380.0 558.4V533.3h2.1V558.4zM1383.0 558.4V541.5h2.1V558.4zM1386.0 558.4V547.1h2.1V558.4zM1389.0 558.4V546.4h2.1V558.4zM1392.0 558.4V552.4h2.1V558.4zM1395.0 558.4V554.1h2.1V558.4zM1398.0 558.4V549.9h2.1V558.4zM1401.0 558.4V548.3h2.1V558.4zM1404.0 558.4V542.4h2.1V558.4zM1407.0 558.4V541.1h2.1V558.4zM1409.9 558.4V549.9h2.1V558.4zM1412.9 558.4V536.2h2.1V558.4zM1415.9 558.4V531.9h2.1V558.4zM1418.9 558.4V543.6h2.1V558.4zM1421.9 558.4V548.9h2.1V558.4zM1424.9 558.4V550.9h2.1V558.4zM1427.9 558.4V545.2h2.1V558.4zM1430.9 558.4V519.8h2.1V558.4zM1433.9 558.4V514.5h2.1V558.4zM1436.9 558.4V542.1h2.1V558.4zM1439.9 558.4V552.3h2.1V558.4zM1442.9 558.4V544.2h2.1V558.4zM1445.9 558.4V545.2h2.1V558.4zM1448.9 558.4V549.7h2.1V558.4zM1451.8 558.4V538.6h2.1V558.4zM1454.8 558.4V548.3h2.1V558.4zM1457.8 558.4V552.0h2.1V558.4zM1460.8 558.4V550.5h2.1V558.4zM1463.8 558.4V549.5h2.1V558.4zM1466.8 558.4V544.1h2.1V558.4zM1469.8 558.4V542.5h2.1V558.4zM1472.8 558.4V541.5h2.1V558.4zM1475.8 558.4V548.2h2.1V558.4zM1478.8 558.4V552.1h2.1V558.4zM1481.8 558.4V548.4h2.1V558.4zM1484.8 558.4V541.5h2.1V558.4zM1487.8 558.4V539.2h2.1V558.4zM1490.8 558.4V540.2h2.1V558.4zM1493.8 558.4V556.2h2.1V558.4z" fill="#4b92e3"/></svg>
<div class="t" style="left:371.16px;top:257.00px;font-size:12.5px;color:#737d86;letter-spacing:0.700px;">40K</div>
<div class="t" style="left:371.16px;top:328.00px;font-size:12.5px;color:#737d86;letter-spacing:0.700px;">30K</div>
<div class="t" style="left:371.16px;top:403.00px;font-size:12.5px;color:#737d86;letter-spacing:0.700px;">20K</div>
<div class="t" style="left:371.16px;top:478.00px;font-size:12.5px;color:#737d86;letter-spacing:0.700px;">10K</div>
<div class="t" style="left:387.85px;top:552.00px;font-size:12.5px;color:#737d86;letter-spacing:0.700px;">0</div>
<div class="t" style="left:390.01px;top:573.00px;font-size:12.5px;color:#737d86;letter-spacing:-0.150px;">Jan 4</div>
<div class="t" style="left:461.61px;top:573.00px;font-size:12.5px;color:#737d86;letter-spacing:-0.150px;">Jan 29</div>
<div class="t" style="left:541.92px;top:573.00px;font-size:12.5px;color:#737d86;letter-spacing:-0.150px;">Feb 25</div>
<div class="t" style="left:622.92px;top:573.00px;font-size:12.5px;color:#737d86;letter-spacing:-0.150px;">Mar 23</div>
<div class="t" style="left:701.96px;top:573.00px;font-size:12.5px;color:#737d86;letter-spacing:-0.150px;">Apr 18</div>
<div class="t" style="left:777.38px;top:573.00px;font-size:12.5px;color:#737d86;letter-spacing:-0.150px;">May 14</div>
<div class="t" style="left:860.01px;top:573.00px;font-size:12.5px;color:#737d86;letter-spacing:-0.150px;">Jun 9</div>
<div class="t" style="left:931.10px;top:573.00px;font-size:12.5px;color:#737d86;letter-spacing:-0.150px;">Jul 2</div>
<div class="t" style="left:999.70px;top:573.00px;font-size:12.5px;color:#737d86;letter-spacing:-0.150px;">Jul 26</div>
<div class="t" style="left:1074.07px;top:573.00px;font-size:12.5px;color:#737d86;letter-spacing:-0.150px;">Aug 21</div>
<div class="t" style="left:1152.07px;top:573.00px;font-size:12.5px;color:#737d86;letter-spacing:-0.150px;">Sep 16</div>
<div class="t" style="left:1230.96px;top:573.00px;font-size:12.5px;color:#737d86;letter-spacing:-0.150px;">Oct 12</div>
<div class="t" style="left:1307.97px;top:573.00px;font-size:12.5px;color:#737d86;letter-spacing:-0.150px;">Nov 6</div>
<div class="t" style="left:1382.47px;top:573.00px;font-size:12.5px;color:#737d86;letter-spacing:-0.150px;">Dec 1</div>
<div class="t" style="left:1457.08px;top:573.00px;font-size:12.5px;color:#737d86;letter-spacing:-0.150px;">Dec 27</div>
<div class="card" style="left:347px;top:617px;width:574.5px;height:228.5px"></div>
<div class="card" style="left:942px;top:617px;width:576px;height:228.5px"></div>
<div class="t m" style="left:365.40px;top:637.00px;font-size:18px;color:#3a4045;letter-spacing:0.168px;">Abonnements au fil du temps</div>
<div class="t m" style="left:960.00px;top:637.00px;font-size:18px;color:#3a4045;letter-spacing:0.061px;">Posts au fil du temps</div>
<svg width="1536" height="1455" viewBox="0 0 1536 1455"><circle cx="895.5" cy="646.4" r="6.8" fill="none" stroke="#6a7177" stroke-width="1.5"/><rect x="894.75" y="645.5" width="1.5" height="4.3" fill="#6a7177"/><circle cx="895.5" cy="643.3" r="1" fill="#6a7177"/><circle cx="1490" cy="646.4" r="6.8" fill="none" stroke="#6a7177" stroke-width="1.5"/><rect x="1489.25" y="645.5" width="1.5" height="4.3" fill="#6a7177"/><circle cx="1490" cy="643.3" r="1" fill="#6a7177"/></svg>
<svg width="1536" height="1455" viewBox="0 0 1536 1455"><rect x="404" y="681.0" width="496" height="1" fill="#e9ebec"/><rect x="404" y="733.4" width="496" height="1" fill="#e9ebec"/><rect x="404" y="769.1" width="496" height="1" fill="#e9ebec"/><rect x="404" y="804.9" width="496" height="1" fill="#e9ebec"/><path d="M404.00 747.8v-2.7h1.36v2.7zM405.36 747.8v-4.9h1.36v4.9zM406.72 747.8v-5.2h1.36v5.2zM408.08 747.8v-8.8h1.36v8.8zM409.44 747.8v-7.4h1.36v7.4zM410.79 747.8v-7.3h1.36v7.3zM412.15 747.8v-2.4h1.36v2.4zM413.51 747.8v-4.0h1.36v4.0zM414.87 747.8v-6.0h1.36v6.0zM416.23 747.8v-3.2h1.36v3.2zM417.59 747.8v-2.0h1.36v2.0zM418.95 747.8v-6.6h1.36v6.6zM420.31 747.8v-7.5h1.36v7.5zM421.67 747.8v-6.8h1.36v6.8zM423.02 747.8v-9.5h1.36v9.5zM424.38 747.8v-5.9h1.36v5.9zM425.74 747.8v-4.8h1.36v4.8zM427.10 747.8v-4.3h1.36v4.3zM428.46 747.8v-2.3h1.36v2.3zM429.82 747.8v-6.1h1.36v6.1zM431.18 747.8v-5.2h1.36v5.2zM432.54 747.8v-5.7h1.36v5.7zM433.90 747.8v-7.0h1.36v7.0zM435.25 747.8v-5.1h1.36v5.1zM436.61 747.8v-5.0h1.36v5.0zM437.97 747.8v-6.1h1.36v6.1zM439.33 747.8v-9.1h1.36v9.1zM440.69 747.8v-5.3h1.36v5.3zM442.05 747.8v-8.8h1.36v8.8zM443.41 747.8v-7.7h1.36v7.7zM444.77 747.8v-7.1h1.36v7.1zM446.13 747.8v-5.8h1.36v5.8zM447.48 747.8v-7.6h1.36v7.6zM448.84 747.8v-7.5h1.36v7.5zM450.20 747.8v-5.5h1.36v5.5zM451.56 747.8v-5.1h1.36v5.1zM452.92 747.8v-2.5h1.36v2.5zM454.28 747.8v-3.5h1.36v3.5zM455.64 747.8v-3.2h1.36v3.2zM457.00 747.8v-2.0h1.36v2.0zM458.36 747.8v-2.3h1.36v2.3zM459.72 747.8v-5.6h1.36v5.6zM461.07 747.8v-5.0h1.36v5.0zM462.43 747.8v-2.9h1.36v2.9zM463.79 747.8v-4.7h1.36v4.7zM465.15 747.8v-7.4h1.36v7.4zM466.51 747.8v-6.0h1.36v6.0zM467.87 747.8v-6.2h1.36v6.2zM469.23 747.8v-2.7h1.36v2.7zM470.59 747.8v-5.5h1.36v5.5zM471.95 747.8v-6.8h1.36v6.8zM473.30 747.8v-2.9h1.36v2.9zM474.66 747.8v-4.7h1.36v4.7zM476.02 747.8v-6.5h1.36v6.5zM477.38 747.8v-5.8h1.36v5.8zM478.74 747.8v-5.4h1.36v5.4zM480.10 747.8v-10.4h1.36v10.4zM481.46 747.8v-6.7h1.36v6.7zM482.82 747.8v-3.9h1.36v3.9zM484.18 747.8v-2.2h1.36v2.2zM485.53 747.8v-3.9h1.36v3.9zM486.89 747.8v-3.7h1.36v3.7zM488.25 747.8v-5.5h1.36v5.5zM489.61 747.8v-2.0h1.36v2.0zM490.97 747.8v-5.4h1.36v5.4zM492.33 747.8v-4.3h1.36v4.3zM493.69 747.8v-5.5h1.36v5.5zM495.05 747.8v-7.6h1.36v7.6zM496.41 747.8v-7.8h1.36v7.8zM497.76 747.8v-5.5h1.36v5.5zM499.12 747.8v-9.4h1.36v9.4zM500.48 747.8v-3.3h1.36v3.3zM501.84 747.8v-5.6h1.36v5.6zM503.20 747.8v-6.8h1.36v6.8zM504.56 747.8v-6.5h1.36v6.5zM505.92 747.8v-6.0h1.36v6.0zM507.28 747.8v-4.7h1.36v4.7zM508.64 747.8v-6.4h1.36v6.4zM509.99 747.8v-4.4h1.36v4.4zM511.35 747.8v-8.8h1.36v8.8zM512.71 747.8v-5.5h1.36v5.5zM514.07 747.8v-3.2h1.36v3.2zM515.43 747.8v-5.6h1.36v5.6zM516.79 747.8v-4.6h1.36v4.6zM518.15 747.8v-5.7h1.36v5.7zM519.51 747.8v-7.3h1.36v7.3zM520.87 747.8v-4.3h1.36v4.3zM522.22 747.8v-6.6h1.36v6.6zM523.58 747.8v-4.0h1.36v4.0zM524.94 747.8v-5.3h1.36v5.3zM526.30 747.8v-2.0h1.36v2.0zM527.66 747.8v-3.5h1.36v3.5zM529.02 747.8v-4.0h1.36v4.0zM530.38 747.8v-6.0h1.36v6.0zM531.74 747.8v-7.8h1.36v7.8zM533.10 747.8v-7.6h1.36v7.6zM534.45 747.8v-6.5h1.36v6.5zM535.81 747.8v-7.8h1.36v7.8zM537.17 747.8v-5.4h1.36v5.4zM538.53 747.8v-4.2h1.36v4.2zM539.89 747.8v-5.2h1.36v5.2zM541.25 747.8v-6.1h1.36v6.1zM542.61 747.8v-5.4h1.36v5.4zM543.97 747.8v-3.7h1.36v3.7zM545.33 747.8v-5.4h1.36v5.4zM546.68 747.8v-6.7h1.36v6.7zM548.04 747.8v-7.8h1.36v7.8zM549.40 747.8v-4.0h1.36v4.0zM550.76 747.8v-7.6h1.36v7.6zM552.12 747.8v-5.5h1.36v5.5zM553.48 747.8v-7.8h1.36v7.8zM554.84 747.8v-3.8h1.36v3.8zM556.20 747.8v-6.6h1.36v6.6zM557.56 747.8v-6.1h1.36v6.1zM558.92 747.8v-4.1h1.36v4.1zM560.27 747.8v-6.7h1.36v6.7zM561.63 747.8v-9.4h1.36v9.4zM562.99 747.8v-2.0h1.36v2.0zM564.35 747.8v-4.7h1.36v4.7zM565.71 747.8v-5.6h1.36v5.6zM567.07 747.8v-3.3h1.36v3.3zM568.43 747.8v-6.6h1.36v6.6zM569.79 747.8v-6.3h1.36v6.3zM571.15 747.8v-4.2h1.36v4.2zM572.50 747.8v-3.6h1.36v3.6zM573.86 747.8v-5.5h1.36v5.5zM575.22 747.8v-2.0h1.36v2.0zM576.58 747.8v-6.2h1.36v6.2zM577.94 747.8v-2.0h1.36v2.0zM579.30 747.8v-4.4h1.36v4.4zM580.66 747.8v-5.7h1.36v5.7zM582.02 747.8v-3.2h1.36v3.2zM583.38 747.8v-2.2h1.36v2.2zM584.73 747.8v-5.0h1.36v5.0zM586.09 747.8v-7.5h1.36v7.5zM587.45 747.8v-5.0h1.36v5.0zM588.81 747.8v-4.2h1.36v4.2zM590.17 747.8v-2.8h1.36v2.8zM591.53 747.8v-7.4h1.36v7.4zM592.89 747.8v-4.6h1.36v4.6zM594.25 747.8v-6.9h1.36v6.9zM595.61 747.8v-6.8h1.36v6.8zM596.96 747.8v-5.9h1.36v5.9zM598.32 747.8v-4.7h1.36v4.7zM599.68 747.8v-5.5h1.36v5.5zM601.04 747.8v-3.7h1.36v3.7zM602.40 747.8v-3.2h1.36v3.2zM603.76 747.8v-5.1h1.36v5.1zM605.12 747.8v-4.5h1.36v4.5zM606.48 747.8v-3.6h1.36v3.6zM607.84 747.8v-4.4h1.36v4.4zM609.19 747.8v-5.7h1.36v5.7zM610.55 747.8v-8.5h1.36v8.5zM611.91 747.8v-4.2h1.36v4.2zM613.27 747.8v-5.7h1.36v5.7zM614.63 747.8v-4.5h1.36v4.5zM615.99 747.8v-2.2h1.36v2.2zM617.35 747.8v-3.0h1.36v3.0zM618.71 747.8v-4.3h1.36v4.3zM620.07 747.8v-5.1h1.36v5.1zM621.42 747.8v-6.9h1.36v6.9zM622.78 747.8v-6.4h1.36v6.4zM624.14 747.8v-5.3h1.36v5.3zM625.50 747.8v-2.8h1.36v2.8zM626.86 747.8v-6.7h1.36v6.7zM628.22 747.8v-5.0h1.36v5.0zM629.58 747.8v-6.1h1.36v6.1zM630.94 747.8v-3.2h1.36v3.2zM632.30 747.8v-2.0h1.36v2.0zM633.65 747.8v-3.7h1.36v3.7zM635.01 747.8v-3.9h1.36v3.9zM636.37 747.8v-5.4h1.36v5.4zM637.73 747.8v-3.4h1.36v3.4zM639.09 747.8v-2.3h1.36v2.3zM640.45 747.8v-4.4h1.36v4.4zM641.81 747.8v-6.0h1.36v6.0zM643.17 747.8v-4.5h1.36v4.5zM644.53 747.8v-6.7h1.36v6.7zM645.88 747.8v-2.0h1.36v2.0zM647.24 747.8v-2.8h1.36v2.8zM648.60 747.8v-3.1h1.36v3.1zM649.96 747.8v-7.5h1.36v7.5zM651.32 747.8v-4.3h1.36v4.3zM652.68 747.8v-2.6h1.36v2.6zM654.04 747.8v-5.6h1.36v5.6zM655.40 747.8v-5.1h1.36v5.1zM656.76 747.8v-6.1h1.36v6.1zM658.12 747.8v-6.0h1.36v6.0zM659.47 747.8v-4.4h1.36v4.4zM660.83 747.8v-7.5h1.36v7.5zM662.19 747.8v-7.4h1.36v7.4zM663.55 747.8v-8.3h1.36v8.3zM664.91 747.8v-5.7h1.36v5.7zM666.27 747.8v-4.5h1.36v4.5zM667.63 747.8v-3.0h1.36v3.0zM668.99 747.8v-10.7h1.36v10.7zM670.35 747.8v-4.4h1.36v4.4zM671.70 747.8v-3.9h1.36v3.9zM673.06 747.8v-4.6h1.36v4.6zM674.42 747.8v-6.0h1.36v6.0zM675.78 747.8v-5.7h1.36v5.7zM677.14 747.8v-5.8h1.36v5.8zM678.50 747.8v-6.2h1.36v6.2zM679.86 747.8v-6.0h1.36v6.0zM681.22 747.8v-3.6h1.36v3.6zM682.58 747.8v-2.4h1.36v2.4zM683.93 747.8v-7.0h1.36v7.0zM685.29 747.8v-5.3h1.36v5.3zM686.65 747.8v-3.7h1.36v3.7zM688.01 747.8v-5.9h1.36v5.9zM689.37 747.8v-3.9h1.36v3.9zM690.73 747.8v-4.2h1.36v4.2zM692.09 747.8v-6.0h1.36v6.0zM693.45 747.8v-9.0h1.36v9.0zM694.81 747.8v-7.6h1.36v7.6zM696.16 747.8v-5.1h1.36v5.1zM697.52 747.8v-3.9h1.36v3.9zM698.88 747.8v-4.2h1.36v4.2zM700.24 747.8v-5.7h1.36v5.7zM701.60 747.8v-4.5h1.36v4.5zM702.96 747.8v-8.6h1.36v8.6zM704.32 747.8v-5.8h1.36v5.8zM705.68 747.8v-6.3h1.36v6.3zM707.04 747.8v-5.5h1.36v5.5zM708.39 747.8v-3.8h1.36v3.8zM709.75 747.8v-4.1h1.36v4.1zM711.11 747.8v-2.8h1.36v2.8zM712.47 747.8v-5.5h1.36v5.5zM713.83 747.8v-6.2h1.36v6.2zM715.19 747.8v-4.0h1.36v4.0zM716.55 747.8v-9.7h1.36v9.7zM717.91 747.8v-4.5h1.36v4.5zM719.27 747.8v-4.3h1.36v4.3zM720.62 747.8v-4.5h1.36v4.5zM721.98 747.8v-4.9h1.36v4.9zM723.34 747.8v-6.4h1.36v6.4zM724.70 747.8v-2.8h1.36v2.8zM726.06 747.8v-5.7h1.36v5.7zM727.42 747.8v-4.0h1.36v4.0zM728.78 747.8v-3.0h1.36v3.0zM730.14 747.8v-5.1h1.36v5.1zM731.50 747.8v-6.1h1.36v6.1zM732.85 747.8v-4.3h1.36v4.3zM734.21 747.8v-5.0h1.36v5.0zM735.57 747.8v-4.0h1.36v4.0zM736.93 747.8v-4.9h1.36v4.9zM738.29 747.8v-7.0h1.36v7.0zM739.65 747.8v-7.2h1.36v7.2zM741.01 747.8v-5.0h1.36v5.0zM742.37 747.8v-5.2h1.36v5.2zM743.73 747.8v-3.4h1.36v3.4zM745.08 747.8v-66.3h1.36v66.3zM746.44 747.8v-6.0h1.36v6.0zM747.80 747.8v-7.3h1.36v7.3zM749.16 747.8v-4.6h1.36v4.6zM750.52 747.8v-4.1h1.36v4.1zM751.88 747.8v-4.4h1.36v4.4zM753.24 747.8v-10.0h1.36v10.0zM754.60 747.8v-7.3h1.36v7.3zM755.96 747.8v-4.9h1.36v4.9zM757.32 747.8v-3.1h1.36v3.1zM758.67 747.8v-4.2h1.36v4.2zM760.03 747.8v-3.8h1.36v3.8zM761.39 747.8v-3.9h1.36v3.9zM762.75 747.8v-6.5h1.36v6.5zM764.11 747.8v-3.5h1.36v3.5zM765.47 747.8v-2.8h1.36v2.8zM766.83 747.8v-4.4h1.36v4.4zM768.19 747.8v-5.1h1.36v5.1zM769.55 747.8v-3.9h1.36v3.9zM770.90 747.8v-4.1h1.36v4.1zM772.26 747.8v-4.4h1.36v4.4zM773.62 747.8v-6.3h1.36v6.3zM774.98 747.8v-6.0h1.36v6.0zM776.34 747.8v-6.4h1.36v6.4zM777.70 747.8v-6.8h1.36v6.8zM779.06 747.8v-9.5h1.36v9.5zM780.42 747.8v-5.3h1.36v5.3zM781.78 747.8v-2.0h1.36v2.0zM783.13 747.8v-7.8h1.36v7.8zM784.49 747.8v-3.6h1.36v3.6zM785.85 747.8v-6.6h1.36v6.6zM787.21 747.8v-3.4h1.36v3.4zM788.57 747.8v-6.4h1.36v6.4zM789.93 747.8v-4.8h1.36v4.8zM791.29 747.8v-6.6h1.36v6.6zM792.65 747.8v-4.9h1.36v4.9zM794.01 747.8v-3.6h1.36v3.6zM795.36 747.8v-4.4h1.36v4.4zM796.72 747.8v-6.3h1.36v6.3zM798.08 747.8v-6.8h1.36v6.8zM799.44 747.8v-5.7h1.36v5.7zM800.80 747.8v-6.7h1.36v6.7zM802.16 747.8v-5.5h1.36v5.5zM803.52 747.8v-6.8h1.36v6.8zM804.88 747.8v-7.4h1.36v7.4zM806.24 747.8v-4.4h1.36v4.4zM807.59 747.8v-5.7h1.36v5.7zM808.95 747.8v-2.5h1.36v2.5zM810.31 747.8v-3.1h1.36v3.1zM811.67 747.8v-7.5h1.36v7.5zM813.03 747.8v-4.9h1.36v4.9zM814.39 747.8v-3.9h1.36v3.9zM815.75 747.8v-5.6h1.36v5.6zM817.11 747.8v-6.4h1.36v6.4zM818.47 747.8v-6.2h1.36v6.2zM819.82 747.8v-7.2h1.36v7.2zM821.18 747.8v-5.7h1.36v5.7zM822.54 747.8v-3.3h1.36v3.3zM823.90 747.8v-7.3h1.36v7.3zM825.26 747.8v-4.3h1.36v4.3zM826.62 747.8v-6.4h1.36v6.4zM827.98 747.8v-4.9h1.36v4.9zM829.34 747.8v-10.3h1.36v10.3zM830.70 747.8v-3.1h1.36v3.1zM832.05 747.8v-7.8h1.36v7.8zM833.41 747.8v-6.0h1.36v6.0zM834.77 747.8v-7.2h1.36v7.2zM836.13 747.8v-4.9h1.36v4.9zM837.49 747.8v-6.3h1.36v6.3zM838.85 747.8v-6.6h1.36v6.6zM840.21 747.8v-7.4h1.36v7.4zM841.57 747.8v-5.8h1.36v5.8zM842.93 747.8v-8.6h1.36v8.6zM844.28 747.8v-2.8h1.36v2.8zM845.64 747.8v-7.8h1.36v7.8zM847.00 747.8v-3.1h1.36v3.1zM848.36 747.8v-6.0h1.36v6.0zM849.72 747.8v-6.3h1.36v6.3zM851.08 747.8v-3.6h1.36v3.6zM852.44 747.8v-2.9h1.36v2.9zM853.80 747.8v-6.0h1.36v6.0zM855.16 747.8v-4.7h1.36v4.7zM856.52 747.8v-3.3h1.36v3.3zM857.87 747.8v-5.8h1.36v5.8zM859.23 747.8v-5.6h1.36v5.6zM860.59 747.8v-4.2h1.36v4.2zM861.95 747.8v-5.8h1.36v5.8zM863.31 747.8v-6.8h1.36v6.8zM864.67 747.8v-5.4h1.36v5.4zM866.03 747.8v-5.1h1.36v5.1zM867.39 747.8v-6.9h1.36v6.9zM868.75 747.8v-5.8h1.36v5.8zM870.10 747.8v-7.1h1.36v7.1zM871.46 747.8v-2.0h1.36v2.0zM872.82 747.8v-4.1h1.36v4.1zM874.18 747.8v-6.6h1.36v6.6zM875.54 747.8v-6.2h1.36v6.2zM876.90 747.8v-2.5h1.36v2.5zM878.26 747.8v-5.3h1.36v5.3zM879.62 747.8v-6.9h1.36v6.9zM880.98 747.8v-6.6h1.36v6.6zM882.33 747.8v-5.3h1.36v5.3zM883.69 747.8v-3.5h1.36v3.5zM885.05 747.8v-4.2h1.36v4.2zM886.41 747.8v-3.6h1.36v3.6zM887.77 747.8v-5.1h1.36v5.1zM889.13 747.8v-3.6h1.36v3.6zM890.49 747.8v-4.5h1.36v4.5zM891.85 747.8v-3.8h1.36v3.8zM893.21 747.8v-4.4h1.36v4.4zM894.56 747.8v-4.9h1.36v4.9zM895.92 747.8v-6.0h1.36v6.0zM897.28 747.8v-4.3h1.36v4.3zM898.64 747.8v-5.4h1.36v5.4z" fill="#4b92e3"/><path d="M404.00 747.8v0.9h1.36v-0.9zM405.36 747.8v1.6h1.36v-1.6zM406.72 747.8v3.1h1.36v-3.1zM408.08 747.8v0.9h1.36v-0.9zM409.44 747.8v2.5h1.36v-2.5zM412.15 747.8v0.9h1.36v-0.9zM414.87 747.8v1.2h1.36v-1.2zM417.59 747.8v3.4h1.36v-3.4zM418.95 747.8v0.9h1.36v-0.9zM420.31 747.8v1.4h1.36v-1.4zM421.67 747.8v0.9h1.36v-0.9zM423.02 747.8v1.5h1.36v-1.5zM424.38 747.8v0.9h1.36v-0.9zM425.74 747.8v1.8h1.36v-1.8zM427.10 747.8v1.3h1.36v-1.3zM428.46 747.8v3.9h1.36v-3.9zM429.82 747.8v0.9h1.36v-0.9zM431.18 747.8v0.9h1.36v-0.9zM432.54 747.8v0.9h1.36v-0.9zM433.90 747.8v0.9h1.36v-0.9zM436.61 747.8v0.9h1.36v-0.9zM437.97 747.8v0.9h1.36v-0.9zM439.33 747.8v1.4h1.36v-1.4zM440.69 747.8v0.9h1.36v-0.9zM443.41 747.8v1.3h1.36v-1.3zM444.77 747.8v2.7h1.36v-2.7zM446.13 747.8v5.3h1.36v-5.3zM447.48 747.8v0.9h1.36v-0.9zM451.56 747.8v0.9h1.36v-0.9zM454.28 747.8v0.9h1.36v-0.9zM457.00 747.8v0.9h1.36v-0.9zM458.36 747.8v3.5h1.36v-3.5zM459.72 747.8v0.9h1.36v-0.9zM461.07 747.8v0.9h1.36v-0.9zM462.43 747.8v2.8h1.36v-2.8zM465.15 747.8v3.1h1.36v-3.1zM466.51 747.8v0.9h1.36v-0.9zM467.87 747.8v1.3h1.36v-1.3zM469.23 747.8v0.9h1.36v-0.9zM470.59 747.8v1.5h1.36v-1.5zM471.95 747.8v0.9h1.36v-0.9zM473.30 747.8v0.9h1.36v-0.9zM474.66 747.8v0.9h1.36v-0.9zM476.02 747.8v0.9h1.36v-0.9zM477.38 747.8v2.9h1.36v-2.9zM478.74 747.8v0.9h1.36v-0.9zM480.10 747.8v1.2h1.36v-1.2zM481.46 747.8v0.9h1.36v-0.9zM482.82 747.8v0.9h1.36v-0.9zM484.18 747.8v1.5h1.36v-1.5zM485.53 747.8v1.5h1.36v-1.5zM486.89 747.8v0.9h1.36v-0.9zM489.61 747.8v0.9h1.36v-0.9zM492.33 747.8v0.9h1.36v-0.9zM496.41 747.8v1.7h1.36v-1.7zM497.76 747.8v2.9h1.36v-2.9zM499.12 747.8v2.4h1.36v-2.4zM500.48 747.8v0.9h1.36v-0.9zM501.84 747.8v0.9h1.36v-0.9zM504.56 747.8v1.6h1.36v-1.6zM505.92 747.8v0.9h1.36v-0.9zM507.28 747.8v0.9h1.36v-0.9zM508.64 747.8v0.9h1.36v-0.9zM509.99 747.8v0.9h1.36v-0.9zM511.35 747.8v0.9h1.36v-0.9zM512.71 747.8v0.9h1.36v-0.9zM515.43 747.8v5.1h1.36v-5.1zM516.79 747.8v0.9h1.36v-0.9zM518.15 747.8v3.5h1.36v-3.5zM519.51 747.8v1.4h1.36v-1.4zM520.87 747.8v0.9h1.36v-0.9zM522.22 747.8v1.5h1.36v-1.5zM523.58 747.8v0.9h1.36v-0.9zM524.94 747.8v0.9h1.36v-0.9zM526.30 747.8v0.9h1.36v-0.9zM529.02 747.8v1.7h1.36v-1.7zM530.38 747.8v1.4h1.36v-1.4zM531.74 747.8v0.9h1.36v-0.9zM533.10 747.8v0.9h1.36v-0.9zM534.45 747.8v0.9h1.36v-0.9zM535.81 747.8v0.9h1.36v-0.9zM537.17 747.8v4.6h1.36v-4.6zM538.53 747.8v0.9h1.36v-0.9zM541.25 747.8v2.8h1.36v-2.8zM542.61 747.8v0.9h1.36v-0.9zM543.97 747.8v3.3h1.36v-3.3zM545.33 747.8v0.9h1.36v-0.9zM546.68 747.8v0.9h1.36v-0.9zM548.04 747.8v0.9h1.36v-0.9zM549.40 747.8v0.9h1.36v-0.9zM552.12 747.8v0.9h1.36v-0.9zM554.84 747.8v0.9h1.36v-0.9zM556.20 747.8v0.9h1.36v-0.9zM557.56 747.8v0.9h1.36v-0.9zM558.92 747.8v0.9h1.36v-0.9zM561.63 747.8v0.9h1.36v-0.9zM562.99 747.8v2.7h1.36v-2.7zM564.35 747.8v0.9h1.36v-0.9zM568.43 747.8v1.3h1.36v-1.3zM569.79 747.8v0.9h1.36v-0.9zM571.15 747.8v0.9h1.36v-0.9zM572.50 747.8v0.9h1.36v-0.9zM573.86 747.8v3.2h1.36v-3.2zM575.22 747.8v3.4h1.36v-3.4zM576.58 747.8v0.9h1.36v-0.9zM580.66 747.8v0.9h1.36v-0.9zM582.02 747.8v2.4h1.36v-2.4zM583.38 747.8v1.5h1.36v-1.5zM586.09 747.8v5.1h1.36v-5.1zM587.45 747.8v0.9h1.36v-0.9zM590.17 747.8v1.7h1.36v-1.7zM591.53 747.8v0.9h1.36v-0.9zM592.89 747.8v0.9h1.36v-0.9zM594.25 747.8v0.9h1.36v-0.9zM595.61 747.8v1.6h1.36v-1.6zM596.96 747.8v0.9h1.36v-0.9zM598.32 747.8v1.4h1.36v-1.4zM599.68 747.8v0.9h1.36v-0.9zM602.40 747.8v0.9h1.36v-0.9zM603.76 747.8v0.9h1.36v-0.9zM605.12 747.8v3.1h1.36v-3.1zM606.48 747.8v1.6h1.36v-1.6zM607.84 747.8v0.9h1.36v-0.9zM609.19 747.8v0.9h1.36v-0.9zM611.91 747.8v1.8h1.36v-1.8zM613.27 747.8v0.9h1.36v-0.9zM614.63 747.8v0.9h1.36v-0.9zM615.99 747.8v0.9h1.36v-0.9zM618.71 747.8v0.9h1.36v-0.9zM621.42 747.8v3.2h1.36v-3.2zM622.78 747.8v2.4h1.36v-2.4zM624.14 747.8v1.5h1.36v-1.5zM625.50 747.8v0.9h1.36v-0.9zM628.22 747.8v0.9h1.36v-0.9zM630.94 747.8v0.9h1.36v-0.9zM632.30 747.8v0.9h1.36v-0.9zM635.01 747.8v0.9h1.36v-0.9zM636.37 747.8v2.3h1.36v-2.3zM637.73 747.8v3.0h1.36v-3.0zM639.09 747.8v2.4h1.36v-2.4zM640.45 747.8v0.9h1.36v-0.9zM641.81 747.8v1.7h1.36v-1.7zM643.17 747.8v0.9h1.36v-0.9zM644.53 747.8v0.9h1.36v-0.9zM645.88 747.8v1.8h1.36v-1.8zM647.24 747.8v0.9h1.36v-0.9zM648.60 747.8v0.9h1.36v-0.9zM651.32 747.8v1.4h1.36v-1.4zM652.68 747.8v0.9h1.36v-0.9zM654.04 747.8v1.2h1.36v-1.2zM656.76 747.8v2.8h1.36v-2.8zM659.47 747.8v0.9h1.36v-0.9zM660.83 747.8v1.5h1.36v-1.5zM662.19 747.8v1.4h1.36v-1.4zM663.55 747.8v0.9h1.36v-0.9zM666.27 747.8v0.9h1.36v-0.9zM667.63 747.8v0.9h1.36v-0.9zM668.99 747.8v0.9h1.36v-0.9zM670.35 747.8v0.9h1.36v-0.9zM671.70 747.8v0.9h1.36v-0.9zM673.06 747.8v1.5h1.36v-1.5zM674.42 747.8v1.3h1.36v-1.3zM675.78 747.8v0.9h1.36v-0.9zM677.14 747.8v0.9h1.36v-0.9zM678.50 747.8v3.6h1.36v-3.6zM679.86 747.8v0.9h1.36v-0.9zM681.22 747.8v0.9h1.36v-0.9zM682.58 747.8v3.1h1.36v-3.1zM683.93 747.8v0.9h1.36v-0.9zM685.29 747.8v1.3h1.36v-1.3zM686.65 747.8v0.9h1.36v-0.9zM689.37 747.8v1.8h1.36v-1.8zM692.09 747.8v1.3h1.36v-1.3zM693.45 747.8v0.9h1.36v-0.9zM694.81 747.8v3.8h1.36v-3.8zM696.16 747.8v0.9h1.36v-0.9zM698.88 747.8v4.1h1.36v-4.1zM700.24 747.8v0.9h1.36v-0.9zM701.60 747.8v2.4h1.36v-2.4zM702.96 747.8v1.6h1.36v-1.6zM705.68 747.8v1.5h1.36v-1.5zM707.04 747.8v0.9h1.36v-0.9zM708.39 747.8v2.4h1.36v-2.4zM709.75 747.8v0.9h1.36v-0.9zM715.19 747.8v0.9h1.36v-0.9zM717.91 747.8v0.9h1.36v-0.9zM719.27 747.8v0.9h1.36v-0.9zM720.62 747.8v2.9h1.36v-2.9zM721.98 747.8v1.7h1.36v-1.7zM724.70 747.8v0.9h1.36v-0.9zM726.06 747.8v2.4h1.36v-2.4zM727.42 747.8v1.2h1.36v-1.2zM728.78 747.8v0.9h1.36v-0.9zM730.14 747.8v0.9h1.36v-0.9zM734.21 747.8v0.9h1.36v-0.9zM735.57 747.8v0.9h1.36v-0.9zM736.93 747.8v1.2h1.36v-1.2zM739.65 747.8v5.4h1.36v-5.4zM741.01 747.8v1.3h1.36v-1.3zM742.37 747.8v1.7h1.36v-1.7zM743.73 747.8v0.9h1.36v-0.9zM745.08 747.8v58.0h1.36v-58.0zM746.44 747.8v7.5h1.36v-7.5zM747.80 747.8v0.9h1.36v-0.9zM749.16 747.8v0.9h1.36v-0.9zM750.52 747.8v0.9h1.36v-0.9zM753.24 747.8v0.9h1.36v-0.9zM754.60 747.8v0.9h1.36v-0.9zM757.32 747.8v0.9h1.36v-0.9zM758.67 747.8v1.3h1.36v-1.3zM761.39 747.8v1.3h1.36v-1.3zM762.75 747.8v0.9h1.36v-0.9zM764.11 747.8v1.2h1.36v-1.2zM765.47 747.8v1.2h1.36v-1.2zM766.83 747.8v0.9h1.36v-0.9zM768.19 747.8v1.4h1.36v-1.4zM769.55 747.8v0.9h1.36v-0.9zM770.90 747.8v1.3h1.36v-1.3zM773.62 747.8v1.2h1.36v-1.2zM776.34 747.8v3.4h1.36v-3.4zM777.70 747.8v0.9h1.36v-0.9zM780.42 747.8v1.3h1.36v-1.3zM781.78 747.8v1.6h1.36v-1.6zM783.13 747.8v0.9h1.36v-0.9zM787.21 747.8v1.5h1.36v-1.5zM788.57 747.8v1.5h1.36v-1.5zM791.29 747.8v0.9h1.36v-0.9zM792.65 747.8v2.5h1.36v-2.5zM795.36 747.8v0.9h1.36v-0.9zM798.08 747.8v2.6h1.36v-2.6zM799.44 747.8v0.9h1.36v-0.9zM800.80 747.8v0.9h1.36v-0.9zM802.16 747.8v0.9h1.36v-0.9zM803.52 747.8v0.9h1.36v-0.9zM804.88 747.8v1.6h1.36v-1.6zM806.24 747.8v1.4h1.36v-1.4zM807.59 747.8v3.0h1.36v-3.0zM808.95 747.8v1.8h1.36v-1.8zM810.31 747.8v0.9h1.36v-0.9zM811.67 747.8v0.9h1.36v-0.9zM813.03 747.8v0.9h1.36v-0.9zM814.39 747.8v1.4h1.36v-1.4zM815.75 747.8v1.3h1.36v-1.3zM817.11 747.8v1.6h1.36v-1.6zM818.47 747.8v0.9h1.36v-0.9zM819.82 747.8v3.0h1.36v-3.0zM821.18 747.8v1.2h1.36v-1.2zM822.54 747.8v1.3h1.36v-1.3zM825.26 747.8v0.9h1.36v-0.9zM826.62 747.8v0.9h1.36v-0.9zM829.34 747.8v0.9h1.36v-0.9zM830.70 747.8v1.6h1.36v-1.6zM832.05 747.8v2.7h1.36v-2.7zM833.41 747.8v0.9h1.36v-0.9zM836.13 747.8v1.6h1.36v-1.6zM838.85 747.8v0.9h1.36v-0.9zM840.21 747.8v0.9h1.36v-0.9zM841.57 747.8v1.3h1.36v-1.3zM842.93 747.8v3.7h1.36v-3.7zM844.28 747.8v1.7h1.36v-1.7zM847.00 747.8v0.9h1.36v-0.9zM849.72 747.8v0.9h1.36v-0.9zM851.08 747.8v0.9h1.36v-0.9zM852.44 747.8v1.6h1.36v-1.6zM853.80 747.8v0.9h1.36v-0.9zM856.52 747.8v2.4h1.36v-2.4zM857.87 747.8v0.9h1.36v-0.9zM859.23 747.8v2.8h1.36v-2.8zM860.59 747.8v0.9h1.36v-0.9zM864.67 747.8v1.8h1.36v-1.8zM866.03 747.8v1.5h1.36v-1.5zM867.39 747.8v0.9h1.36v-0.9zM868.75 747.8v1.2h1.36v-1.2zM870.10 747.8v1.3h1.36v-1.3zM871.46 747.8v0.9h1.36v-0.9zM872.82 747.8v0.9h1.36v-0.9zM874.18 747.8v0.9h1.36v-0.9zM876.90 747.8v1.3h1.36v-1.3zM878.26 747.8v3.2h1.36v-3.2zM879.62 747.8v0.9h1.36v-0.9zM883.69 747.8v4.3h1.36v-4.3zM885.05 747.8v2.5h1.36v-2.5zM886.41 747.8v0.9h1.36v-0.9zM887.77 747.8v0.9h1.36v-0.9zM889.13 747.8v1.4h1.36v-1.4zM890.49 747.8v0.9h1.36v-0.9zM891.85 747.8v4.2h1.36v-4.2zM893.21 747.8v0.9h1.36v-0.9zM894.56 747.8v0.9h1.36v-0.9zM895.92 747.8v4.4h1.36v-4.4zM897.28 747.8v1.6h1.36v-1.6zM898.64 747.8v0.9h1.36v-0.9z" fill="#e0383e"/></svg>
<div class="t" style="left:380.10px;top:680.00px;font-size:12.5px;color:#737d86;letter-spacing:0.700px;">55</div>
<div class="t" style="left:381.02px;top:730.00px;font-size:12.5px;color:#737d86;letter-spacing:0.700px;">11</div>
<div class="t" style="left:375.24px;top:765.00px;font-size:12.5px;color:#737d86;letter-spacing:0.700px;">-19</div>
<div class="t" style="left:375.24px;top:801.00px;font-size:12.5px;color:#737d86;letter-spacing:0.700px;">-49</div>
<div class="t" style="left:389.51px;top:822.00px;font-size:12.5px;color:#737d86;letter-spacing:-0.150px;">Jan 4</div>
<div class="t" style="left:460.42px;top:822.00px;font-size:12.5px;color:#737d86;letter-spacing:-0.150px;">Feb 28</div>
<div class="t" style="left:540.76px;top:822.00px;font-size:12.5px;color:#737d86;letter-spacing:-0.150px;">Apr 26</div>
<div class="t" style="left:619.31px;top:822.00px;font-size:12.5px;color:#737d86;letter-spacing:-0.150px;">Jun 23</div>
<div class="t" style="left:697.17px;top:822.00px;font-size:12.5px;color:#737d86;letter-spacing:-0.150px;">Aug 20</div>
<div class="t" style="left:777.86px;top:822.00px;font-size:12.5px;color:#737d86;letter-spacing:-0.150px;">Oct 17</div>
<div class="t" style="left:853.78px;top:822.00px;font-size:12.5px;color:#737d86;letter-spacing:-0.150px;">Dec 13</div>
<svg width="1536" height="1455" viewBox="0 0 1536 1455"><rect x="998.4" y="681.8" width="497" height="1" fill="#e9ebec"/><rect x="998.4" y="722.8" width="497" height="1" fill="#e9ebec"/><rect x="998.4" y="763.8" width="497" height="1" fill="#e9ebec"/><rect x="998.4" y="804.8" width="497" height="1" fill="#e9ebec"/><path d="M998.40 805.3v-16.4h1.09v16.4zM999.76 805.3v-57.4h1.09v57.4zM1001.12 805.3v-41.0h1.09v41.0zM1002.48 805.3v-57.4h1.09v57.4zM1003.85 805.3v-49.2h1.09v49.2zM1005.21 805.3v-65.6h1.09v65.6zM1006.57 805.3v-73.8h1.09v73.8zM1007.93 805.3v-49.2h1.09v49.2zM1009.29 805.3v-41.0h1.09v41.0zM1010.65 805.3v-65.6h1.09v65.6zM1012.02 805.3v-16.4h1.09v16.4zM1013.38 805.3v-57.4h1.09v57.4zM1014.74 805.3v-41.0h1.09v41.0zM1016.10 805.3v-90.2h1.09v90.2zM1017.46 805.3v-24.6h1.09v24.6zM1018.82 805.3v-32.8h1.09v32.8zM1020.19 805.3v-41.0h1.09v41.0zM1021.55 805.3v-24.6h1.09v24.6zM1022.91 805.3v-49.2h1.09v49.2zM1024.27 805.3v-49.2h1.09v49.2zM1025.63 805.3v-90.2h1.09v90.2zM1026.99 805.3v-57.4h1.09v57.4zM1028.36 805.3v-16.4h1.09v16.4zM1029.72 805.3v-73.8h1.09v73.8zM1031.08 805.3v-41.0h1.09v41.0zM1032.44 805.3v-82.0h1.09v82.0zM1033.80 805.3v-57.4h1.09v57.4zM1035.16 805.3v-32.8h1.09v32.8zM1036.53 805.3v-73.8h1.09v73.8zM1037.89 805.3v-49.2h1.09v49.2zM1039.25 805.3v-82.0h1.09v82.0zM1040.61 805.3v-49.2h1.09v49.2zM1041.97 805.3v-65.6h1.09v65.6zM1043.33 805.3v-73.8h1.09v73.8zM1044.70 805.3v-73.8h1.09v73.8zM1046.06 805.3v-16.4h1.09v16.4zM1047.42 805.3v-57.4h1.09v57.4zM1048.78 805.3v-24.6h1.09v24.6zM1050.14 805.3v-65.6h1.09v65.6zM1051.50 805.3v-49.2h1.09v49.2zM1052.87 805.3v-32.8h1.09v32.8zM1054.23 805.3v-57.4h1.09v57.4zM1055.59 805.3v-16.4h1.09v16.4zM1056.95 805.3v-49.2h1.09v49.2zM1058.31 805.3v-49.2h1.09v49.2zM1059.67 805.3v-65.6h1.09v65.6zM1061.04 805.3v-24.6h1.09v24.6zM1062.40 805.3v-16.4h1.09v16.4zM1063.76 805.3v-57.4h1.09v57.4zM1065.12 805.3v-82.0h1.09v82.0zM1066.48 805.3v-32.8h1.09v32.8zM1067.84 805.3v-65.6h1.09v65.6zM1069.21 805.3v-41.0h1.09v41.0zM1070.57 805.3v-41.0h1.09v41.0zM1071.93 805.3v-49.2h1.09v49.2zM1073.29 805.3v-32.8h1.09v32.8zM1074.65 805.3v-98.4h1.09v98.4zM1076.01 805.3v-65.6h1.09v65.6zM1077.38 805.3v-16.4h1.09v16.4zM1078.74 805.3v-65.6h1.09v65.6zM1080.10 805.3v-49.2h1.09v49.2zM1081.46 805.3v-16.4h1.09v16.4zM1082.82 805.3v-49.2h1.09v49.2zM1084.18 805.3v-82.0h1.09v82.0zM1085.55 805.3v-32.8h1.09v32.8zM1086.91 805.3v-73.8h1.09v73.8zM1088.27 805.3v-82.0h1.09v82.0zM1089.63 805.3v-16.4h1.09v16.4zM1090.99 805.3v-82.0h1.09v82.0zM1092.35 805.3v-57.4h1.09v57.4zM1093.72 805.3v-73.8h1.09v73.8zM1095.08 805.3v-73.8h1.09v73.8zM1096.44 805.3v-57.4h1.09v57.4zM1097.80 805.3v-41.0h1.09v41.0zM1099.16 805.3v-57.4h1.09v57.4zM1100.52 805.3v-24.6h1.09v24.6zM1101.88 805.3v-32.8h1.09v32.8zM1103.25 805.3v-49.2h1.09v49.2zM1104.61 805.3v-98.4h1.09v98.4zM1105.97 805.3v-24.6h1.09v24.6zM1107.33 805.3v-106.6h1.09v106.6zM1108.69 805.3v-57.4h1.09v57.4zM1110.05 805.3v-41.0h1.09v41.0zM1111.42 805.3v-65.6h1.09v65.6zM1112.78 805.3v-57.4h1.09v57.4zM1114.14 805.3v-57.4h1.09v57.4zM1115.50 805.3v-49.2h1.09v49.2zM1116.86 805.3v-65.6h1.09v65.6zM1118.22 805.3v-73.8h1.09v73.8zM1119.59 805.3v-73.8h1.09v73.8zM1120.95 805.3v-65.6h1.09v65.6zM1122.31 805.3v-49.2h1.09v49.2zM1123.67 805.3v-57.4h1.09v57.4zM1125.03 805.3v-82.0h1.09v82.0zM1126.39 805.3v-49.2h1.09v49.2zM1127.76 805.3v-82.0h1.09v82.0zM1129.12 805.3v-73.8h1.09v73.8zM1130.48 805.3v-32.8h1.09v32.8zM1131.84 805.3v-24.6h1.09v24.6zM1133.20 805.3v-41.0h1.09v41.0zM1134.56 805.3v-73.8h1.09v73.8zM1135.93 805.3v-73.8h1.09v73.8zM1137.29 805.3v-32.8h1.09v32.8zM1138.65 805.3v-82.0h1.09v82.0zM1140.01 805.3v-49.2h1.09v49.2zM1141.37 805.3v-90.2h1.09v90.2zM1142.73 805.3v-24.6h1.09v24.6zM1144.10 805.3v-49.2h1.09v49.2zM1145.46 805.3v-65.6h1.09v65.6zM1146.82 805.3v-16.4h1.09v16.4zM1148.18 805.3v-16.4h1.09v16.4zM1149.54 805.3v-73.8h1.09v73.8zM1150.90 805.3v-114.8h1.09v114.8zM1152.27 805.3v-16.4h1.09v16.4zM1153.63 805.3v-49.2h1.09v49.2zM1154.99 805.3v-49.2h1.09v49.2zM1156.35 805.3v-65.6h1.09v65.6zM1157.71 805.3v-57.4h1.09v57.4zM1159.07 805.3v-41.0h1.09v41.0zM1160.44 805.3v-32.8h1.09v32.8zM1161.80 805.3v-106.6h1.09v106.6zM1163.16 805.3v-49.2h1.09v49.2zM1164.52 805.3v-16.4h1.09v16.4zM1165.88 805.3v-49.2h1.09v49.2zM1167.24 805.3v-82.0h1.09v82.0zM1168.61 805.3v-82.0h1.09v82.0zM1169.97 805.3v-49.2h1.09v49.2zM1171.33 805.3v-49.2h1.09v49.2zM1172.69 805.3v-49.2h1.09v49.2zM1174.05 805.3v-65.6h1.09v65.6zM1175.41 805.3v-57.4h1.09v57.4zM1176.78 805.3v-57.4h1.09v57.4zM1178.14 805.3v-57.4h1.09v57.4zM1179.50 805.3v-65.6h1.09v65.6zM1180.86 805.3v-98.4h1.09v98.4zM1182.22 805.3v-123.0h1.09v123.0zM1183.58 805.3v-57.4h1.09v57.4zM1184.95 805.3v-49.2h1.09v49.2zM1186.31 805.3v-49.2h1.09v49.2zM1187.67 805.3v-41.0h1.09v41.0zM1189.03 805.3v-73.8h1.09v73.8zM1190.39 805.3v-49.2h1.09v49.2zM1191.75 805.3v-49.2h1.09v49.2zM1193.12 805.3v-57.4h1.09v57.4zM1194.48 805.3v-32.8h1.09v32.8zM1195.84 805.3v-65.6h1.09v65.6zM1197.20 805.3v-82.0h1.09v82.0zM1198.56 805.3v-49.2h1.09v49.2zM1199.92 805.3v-65.6h1.09v65.6zM1201.28 805.3v-41.0h1.09v41.0zM1202.65 805.3v-57.4h1.09v57.4zM1204.01 805.3v-41.0h1.09v41.0zM1205.37 805.3v-57.4h1.09v57.4zM1206.73 805.3v-57.4h1.09v57.4zM1208.09 805.3v-114.8h1.09v114.8zM1209.45 805.3v-41.0h1.09v41.0zM1210.82 805.3v-32.8h1.09v32.8zM1212.18 805.3v-65.6h1.09v65.6zM1213.54 805.3v-41.0h1.09v41.0zM1214.90 805.3v-41.0h1.09v41.0zM1216.26 805.3v-65.6h1.09v65.6zM1217.62 805.3v-73.8h1.09v73.8zM1218.99 805.3v-41.0h1.09v41.0zM1220.35 805.3v-65.6h1.09v65.6zM1221.71 805.3v-49.2h1.09v49.2zM1223.07 805.3v-65.6h1.09v65.6zM1224.43 805.3v-41.0h1.09v41.0zM1225.79 805.3v-57.4h1.09v57.4zM1227.16 805.3v-16.4h1.09v16.4zM1228.52 805.3v-73.8h1.09v73.8zM1229.88 805.3v-16.4h1.09v16.4zM1231.24 805.3v-65.6h1.09v65.6zM1232.60 805.3v-73.8h1.09v73.8zM1233.96 805.3v-32.8h1.09v32.8zM1235.33 805.3v-73.8h1.09v73.8zM1236.69 805.3v-57.4h1.09v57.4zM1238.05 805.3v-41.0h1.09v41.0zM1239.41 805.3v-41.0h1.09v41.0zM1240.77 805.3v-57.4h1.09v57.4zM1242.13 805.3v-57.4h1.09v57.4zM1243.50 805.3v-41.0h1.09v41.0zM1244.86 805.3v-16.4h1.09v16.4zM1246.22 805.3v-65.6h1.09v65.6zM1247.58 805.3v-41.0h1.09v41.0zM1248.94 805.3v-73.8h1.09v73.8zM1250.30 805.3v-32.8h1.09v32.8zM1251.67 805.3v-49.2h1.09v49.2zM1253.03 805.3v-16.4h1.09v16.4zM1254.39 805.3v-41.0h1.09v41.0zM1255.75 805.3v-49.2h1.09v49.2zM1257.11 805.3v-65.6h1.09v65.6zM1258.47 805.3v-65.6h1.09v65.6zM1259.84 805.3v-24.6h1.09v24.6zM1261.20 805.3v-16.4h1.09v16.4zM1262.56 805.3v-8.2h1.09v8.2zM1263.92 805.3v-8.2h1.09v8.2zM1265.28 805.3v-16.4h1.09v16.4zM1266.64 805.3v-24.6h1.09v24.6zM1268.01 805.3v-24.6h1.09v24.6zM1269.37 805.3v-24.6h1.09v24.6zM1270.73 805.3v-24.6h1.09v24.6zM1272.09 805.3v-8.2h1.09v8.2zM1273.45 805.3v-24.6h1.09v24.6zM1274.81 805.3v-32.8h1.09v32.8zM1276.18 805.3v-49.2h1.09v49.2zM1277.54 805.3v-24.6h1.09v24.6zM1278.90 805.3v-41.0h1.09v41.0zM1280.26 805.3v-32.8h1.09v32.8zM1281.62 805.3v-41.0h1.09v41.0zM1282.98 805.3v-41.0h1.09v41.0zM1284.35 805.3v-49.2h1.09v49.2zM1285.71 805.3v-32.8h1.09v32.8zM1287.07 805.3v-73.8h1.09v73.8zM1288.43 805.3v-16.4h1.09v16.4zM1289.79 805.3v-41.0h1.09v41.0zM1291.15 805.3v-41.0h1.09v41.0zM1292.52 805.3v-49.2h1.09v49.2zM1293.88 805.3v-32.8h1.09v32.8zM1295.24 805.3v-49.2h1.09v49.2zM1296.60 805.3v-8.2h1.09v8.2zM1297.96 805.3v-8.2h1.09v8.2zM1299.32 805.3v-49.2h1.09v49.2zM1300.68 805.3v-49.2h1.09v49.2zM1302.05 805.3v-57.4h1.09v57.4zM1303.41 805.3v-24.6h1.09v24.6zM1304.77 805.3v-8.2h1.09v8.2zM1306.13 805.3v-16.4h1.09v16.4zM1307.49 805.3v-8.2h1.09v8.2zM1308.85 805.3v-65.6h1.09v65.6zM1310.22 805.3v-41.0h1.09v41.0zM1311.58 805.3v-49.2h1.09v49.2zM1312.94 805.3v-57.4h1.09v57.4zM1314.30 805.3v-41.0h1.09v41.0zM1315.66 805.3v-24.6h1.09v24.6zM1317.02 805.3v-49.2h1.09v49.2zM1318.39 805.3v-8.2h1.09v8.2zM1319.75 805.3v-8.2h1.09v8.2zM1321.11 805.3v-24.6h1.09v24.6zM1322.47 805.3v-8.2h1.09v8.2zM1323.83 805.3v-82.0h1.09v82.0zM1325.19 805.3v-41.0h1.09v41.0zM1326.56 805.3v-8.2h1.09v8.2zM1327.92 805.3v-32.8h1.09v32.8zM1329.28 805.3v-41.0h1.09v41.0zM1330.64 805.3v-8.2h1.09v8.2zM1332.00 805.3v-8.2h1.09v8.2zM1333.36 805.3v-8.2h1.09v8.2zM1334.73 805.3v-41.0h1.09v41.0zM1336.09 805.3v-73.8h1.09v73.8zM1337.45 805.3v-16.4h1.09v16.4zM1338.81 805.3v-41.0h1.09v41.0zM1340.17 805.3v-8.2h1.09v8.2zM1341.53 805.3v-65.6h1.09v65.6zM1342.90 805.3v-24.6h1.09v24.6zM1344.26 805.3v-57.4h1.09v57.4zM1345.62 805.3v-73.8h1.09v73.8zM1346.98 805.3v-57.4h1.09v57.4zM1348.34 805.3v-57.4h1.09v57.4zM1349.70 805.3v-49.2h1.09v49.2zM1351.07 805.3v-24.6h1.09v24.6zM1352.43 805.3v-32.8h1.09v32.8zM1353.79 805.3v-73.8h1.09v73.8zM1355.15 805.3v-65.6h1.09v65.6zM1356.51 805.3v-65.6h1.09v65.6zM1357.87 805.3v-8.2h1.09v8.2zM1359.24 805.3v-32.8h1.09v32.8zM1360.60 805.3v-8.2h1.09v8.2zM1361.96 805.3v-32.8h1.09v32.8zM1363.32 805.3v-32.8h1.09v32.8zM1364.68 805.3v-49.2h1.09v49.2zM1366.04 805.3v-16.4h1.09v16.4zM1367.41 805.3v-49.2h1.09v49.2zM1368.77 805.3v-73.8h1.09v73.8zM1370.13 805.3v-8.2h1.09v8.2zM1371.49 805.3v-24.6h1.09v24.6zM1372.85 805.3v-32.8h1.09v32.8zM1374.21 805.3v-65.6h1.09v65.6zM1375.58 805.3v-49.2h1.09v49.2zM1376.94 805.3v-41.0h1.09v41.0zM1378.30 805.3v-41.0h1.09v41.0zM1379.66 805.3v-65.6h1.09v65.6zM1381.02 805.3v-8.2h1.09v8.2zM1382.38 805.3v-73.8h1.09v73.8zM1383.75 805.3v-16.4h1.09v16.4zM1385.11 805.3v-32.8h1.09v32.8zM1386.47 805.3v-41.0h1.09v41.0zM1387.83 805.3v-57.4h1.09v57.4zM1389.19 805.3v-24.6h1.09v24.6zM1390.55 805.3v-32.8h1.09v32.8zM1391.92 805.3v-41.0h1.09v41.0zM1393.28 805.3v-49.2h1.09v49.2zM1394.64 805.3v-41.0h1.09v41.0zM1396.00 805.3v-24.6h1.09v24.6zM1397.36 805.3v-65.6h1.09v65.6zM1398.72 805.3v-32.8h1.09v32.8zM1400.08 805.3v-82.0h1.09v82.0zM1401.45 805.3v-49.2h1.09v49.2zM1402.81 805.3v-24.6h1.09v24.6zM1404.17 805.3v-24.6h1.09v24.6zM1405.53 805.3v-65.6h1.09v65.6zM1406.89 805.3v-73.8h1.09v73.8zM1408.25 805.3v-41.0h1.09v41.0zM1409.62 805.3v-57.4h1.09v57.4zM1410.98 805.3v-49.2h1.09v49.2zM1412.34 805.3v-65.6h1.09v65.6zM1413.70 805.3v-82.0h1.09v82.0zM1415.06 805.3v-57.4h1.09v57.4zM1416.42 805.3v-16.4h1.09v16.4zM1417.79 805.3v-49.2h1.09v49.2zM1419.15 805.3v-49.2h1.09v49.2zM1420.51 805.3v-49.2h1.09v49.2zM1421.87 805.3v-41.0h1.09v41.0zM1423.23 805.3v-57.4h1.09v57.4zM1424.59 805.3v-57.4h1.09v57.4zM1425.96 805.3v-41.0h1.09v41.0zM1427.32 805.3v-24.6h1.09v24.6zM1428.68 805.3v-49.2h1.09v49.2zM1430.04 805.3v-57.4h1.09v57.4zM1431.40 805.3v-57.4h1.09v57.4zM1432.76 805.3v-41.0h1.09v41.0zM1434.13 805.3v-24.6h1.09v24.6zM1435.49 805.3v-65.6h1.09v65.6zM1436.85 805.3v-32.8h1.09v32.8zM1438.21 805.3v-24.6h1.09v24.6zM1439.57 805.3v-32.8h1.09v32.8zM1440.93 805.3v-8.2h1.09v8.2zM1442.30 805.3v-49.2h1.09v49.2zM1443.66 805.3v-41.0h1.09v41.0zM1445.02 805.3v-49.2h1.09v49.2zM1446.38 805.3v-32.8h1.09v32.8zM1447.74 805.3v-8.2h1.09v8.2zM1449.10 805.3v-16.4h1.09v16.4zM1450.47 805.3v-32.8h1.09v32.8zM1451.83 805.3v-41.0h1.09v41.0zM1453.19 805.3v-32.8h1.09v32.8zM1454.55 805.3v-65.6h1.09v65.6zM1455.91 805.3v-32.8h1.09v32.8zM1457.27 805.3v-32.8h1.09v32.8zM1458.64 805.3v-24.6h1.09v24.6zM1460.00 805.3v-49.2h1.09v49.2zM1461.36 805.3v-57.4h1.09v57.4zM1462.72 805.3v-24.6h1.09v24.6zM1464.08 805.3v-16.4h1.09v16.4zM1465.44 805.3v-57.4h1.09v57.4zM1466.81 805.3v-8.2h1.09v8.2zM1468.17 805.3v-24.6h1.09v24.6zM1469.53 805.3v-41.0h1.09v41.0zM1470.89 805.3v-16.4h1.09v16.4zM1472.25 805.3v-24.6h1.09v24.6zM1473.61 805.3v-8.2h1.09v8.2zM1474.98 805.3v-16.4h1.09v16.4zM1476.34 805.3v-32.8h1.09v32.8zM1477.70 805.3v-24.6h1.09v24.6zM1479.06 805.3v-8.2h1.09v8.2zM1480.42 805.3v-8.2h1.09v8.2zM1481.78 805.3v-24.6h1.09v24.6zM1483.15 805.3v-8.2h1.09v8.2zM1484.51 805.3v-32.8h1.09v32.8zM1485.87 805.3v-24.6h1.09v24.6zM1487.23 805.3v-24.6h1.09v24.6zM1488.59 805.3v-8.2h1.09v8.2zM1489.95 805.3v-8.2h1.09v8.2zM1491.32 805.3v-8.2h1.09v8.2zM1492.68 805.3v-8.2h1.09v8.2zM1494.04 805.3v-16.4h1.09v16.4z" fill="#4b92e3" fill-opacity="0.56"/></svg>
<div class="t" style="left:974.20px;top:680.00px;font-size:12.5px;color:#737d86;letter-spacing:0.700px;">15</div>
<div class="t" style="left:974.20px;top:719.00px;font-size:12.5px;color:#737d86;letter-spacing:0.700px;">10</div>
<div class="t" style="left:981.85px;top:760.00px;font-size:12.5px;color:#737d86;letter-spacing:0.700px;">5</div>
<div class="t" style="left:981.85px;top:800.00px;font-size:12.5px;color:#737d86;letter-spacing:0.700px;">0</div>
<div class="t" style="left:978.31px;top:822.00px;font-size:12.5px;color:#737d86;letter-spacing:-0.150px;">Jan 4</div>
<div class="t" style="left:1049.62px;top:822.00px;font-size:12.5px;color:#737d86;letter-spacing:-0.150px;">Feb 28</div>
<div class="t" style="left:1129.56px;top:822.00px;font-size:12.5px;color:#737d86;letter-spacing:-0.150px;">Apr 26</div>
<div class="t" style="left:1207.61px;top:822.00px;font-size:12.5px;color:#737d86;letter-spacing:-0.150px;">Jun 23</div>
<div class="t" style="left:1286.37px;top:822.00px;font-size:12.5px;color:#737d86;letter-spacing:-0.150px;">Aug 20</div>
<div class="t" style="left:1366.26px;top:822.00px;font-size:12.5px;color:#737d86;letter-spacing:-0.150px;">Oct 17</div>
<div class="t" style="left:1442.58px;top:822.00px;font-size:12.5px;color:#737d86;letter-spacing:-0.150px;">Dec 13</div>
<div class="card" style="left:347px;top:864.8px;width:278.4px;height:112.2px"></div>
<div class="t m" style="left:365.40px;top:885.00px;font-size:18px;color:#3a4045;letter-spacing:0.115px;">Abonnés vérifiés</div>
<div class="t h" style="left:365.20px;top:924.00px;font-size:36.5px;font-weight:700;letter-spacing:0.509px;">150</div>
<div class="card" style="left:644.3px;top:864.8px;width:278.4px;height:112.2px"></div>
<div class="t m" style="left:662.70px;top:885.00px;font-size:18px;color:#3a4045;letter-spacing:0.176px;">Impressions</div>
<div class="t h" style="left:662.50px;top:924.00px;font-size:36.5px;font-weight:700;letter-spacing:0.087px;">1.8M</div>
<div class="card" style="left:941.6px;top:864.8px;width:278.4px;height:112.2px"></div>
<div class="t m" style="left:960.00px;top:885.00px;font-size:18px;color:#3a4045;letter-spacing:-0.008px;">Taux d’engagement</div>
<div class="t h" style="left:959.80px;top:924.00px;font-size:36.5px;font-weight:700;letter-spacing:1.339px;">5.8%</div>
<div class="card" style="left:1238.9px;top:864.8px;width:278.4px;height:112.2px"></div>
<div class="t m" style="left:1257.30px;top:885.00px;font-size:18px;color:#3a4045;letter-spacing:-0.138px;">Engagements</div>
<div class="t h" style="left:1257.10px;top:924.00px;font-size:36.5px;font-weight:700;letter-spacing:-0.322px;">109.1K</div>
<div class="card" style="left:347px;top:996.5px;width:278.4px;height:112.2px"></div>
<div class="t m" style="left:365.40px;top:1017.00px;font-size:18px;color:#3a4045;letter-spacing:0.242px;">Visites du profil</div>
<div class="t h" style="left:365.20px;top:1056.00px;font-size:36.5px;font-weight:700;letter-spacing:0.553px;">5K</div>
<div class="card" style="left:644.3px;top:996.5px;width:278.4px;height:112.2px"></div>
<div class="t m" style="left:662.70px;top:1017.00px;font-size:18px;color:#3a4045;letter-spacing:-0.251px;">Réponses</div>
<div class="t h" style="left:662.50px;top:1056.00px;font-size:36.5px;font-weight:700;letter-spacing:1.237px;">3.4K</div>
<div class="card" style="left:941.6px;top:996.5px;width:278.4px;height:112.2px"></div>
<div class="t m" style="left:960.00px;top:1017.00px;font-size:18px;color:#3a4045;letter-spacing:-0.369px;">J'aime</div>
<div class="t h" style="left:959.80px;top:1056.00px;font-size:36.5px;font-weight:700;letter-spacing:-0.871px;">51.7K</div>
<div class="card" style="left:1238.9px;top:996.5px;width:278.4px;height:112.2px"></div>
<div class="t m" style="left:1257.30px;top:1017.00px;font-size:18px;color:#3a4045;letter-spacing:0.063px;">Reposts</div>
<div class="t h" style="left:1257.10px;top:1056.00px;font-size:36.5px;font-weight:700;letter-spacing:1.671px;">8.4K</div>
<div class="card" style="left:347px;top:1128.4px;width:278.4px;height:112.2px"></div>
<div class="t m" style="left:365.40px;top:1149.00px;font-size:18px;color:#3a4045;letter-spacing:0.095px;">Signets</div>
<div class="t h" style="left:365.20px;top:1188.00px;font-size:36.5px;font-weight:700;letter-spacing:-2.847px;">1K</div>
<div class="card" style="left:644.3px;top:1128.4px;width:278.4px;height:112.2px"></div>
<div class="t m" style="left:662.70px;top:1149.00px;font-size:18px;color:#3a4045;letter-spacing:-0.134px;">Partages</div>
<div class="t h" style="left:662.50px;top:1188.00px;font-size:36.5px;font-weight:700;letter-spacing:2.209px;">382</div>
<div class="t n" style="left:438.30px;top:940.00px;font-size:17px;letter-spacing:-0.104px;">/ 9.7K</div>
<svg width="17" height="17" viewBox="0 0 24 24" style="left:510.4px;top:886.4px"><path d="M22.25 12c0-1.43-.88-2.67-2.19-3.34.46-1.39.2-2.9-.81-3.91s-2.52-1.27-3.91-.81c-.66-1.31-1.91-2.19-3.34-2.19s-2.67.88-3.33 2.19c-1.4-.46-2.91-.2-3.92.81s-1.26 2.52-.8 3.91c-1.31.67-2.2 1.91-2.2 3.34s.89 2.67 2.2 3.34c-.46 1.39-.21 2.9.8 3.91s2.52 1.26 3.91.81c.67 1.31 1.91 2.19 3.34 2.19s2.68-.88 3.34-2.19c1.39.45 2.9.2 3.91-.81s1.27-2.52.81-3.91c1.31-.67 2.19-1.91 2.19-3.34zm-11.71 4.2L6.8 12.46l1.41-1.42 2.26 2.26 4.8-5.23 1.47 1.36-6.2 6.77z" fill="#4a90e2"/></svg>
<div class="t" style="left:347.40px;top:1282.00px;font-size:23.5px;font-weight:700;letter-spacing:-0.173px;">Activité des médias</div>
<div class="card" style="left:347px;top:1324.8px;width:278.4px;height:112.2px"></div>
<div class="t m" style="left:365.40px;top:1345.00px;font-size:18px;color:#3a4045;letter-spacing:-0.168px;">Vues de la vidéo</div>
<div class="t h" style="left:365.20px;top:1384.00px;font-size:36.5px;font-weight:700;letter-spacing:0.454px;">75.5K</div>
<div class="card" style="left:644.3px;top:1324.8px;width:278.4px;height:112.2px"></div>
<div class="t m" style="left:662.70px;top:1345.00px;font-size:18px;color:#3a4045;letter-spacing:-0.122px;">Vues des médias</div>
<div class="t h" style="left:662.50px;top:1384.00px;font-size:36.5px;font-weight:700;letter-spacing:1.804px;">84.6K</div>
<svg width="1536" height="1455" viewBox="0 0 1536 1455"><circle cx="600.6" cy="953.4" r="6.6" fill="none" stroke="#6a7177" stroke-width="1.5"/><rect x="599.85" y="952.5" width="1.5" height="4.3" fill="#6a7177"/><circle cx="600.6" cy="950.3" r="1" fill="#6a7177"/><circle cx="897.9" cy="953.4" r="6.6" fill="none" stroke="#6a7177" stroke-width="1.5"/><rect x="897.15" y="952.5" width="1.5" height="4.3" fill="#6a7177"/><circle cx="897.9" cy="950.3" r="1" fill="#6a7177"/><circle cx="1195.2" cy="953.4" r="6.6" fill="none" stroke="#6a7177" stroke-width="1.5"/><rect x="1194.45" y="952.5" width="1.5" height="4.3" fill="#6a7177"/><circle cx="1195.2" cy="950.3" r="1" fill="#6a7177"/><circle cx="1492.5" cy="953.4" r="6.6" fill="none" stroke="#6a7177" stroke-width="1.5"/><rect x="1491.75" y="952.5" width="1.5" height="4.3" fill="#6a7177"/><circle cx="1492.5" cy="950.3" r="1" fill="#6a7177"/><circle cx="600.6" cy="1085.1" r="6.6" fill="none" stroke="#6a7177" stroke-width="1.5"/><rect x="599.85" y="1084.1999999999998" width="1.5" height="4.3" fill="#6a7177"/><circle cx="600.6" cy="1082.0" r="1" fill="#6a7177"/><circle cx="897.9" cy="1085.1" r="6.6" fill="none" stroke="#6a7177" stroke-width="1.5"/><rect x="897.15" y="1084.1999999999998" width="1.5" height="4.3" fill="#6a7177"/><circle cx="897.9" cy="1082.0" r="1" fill="#6a7177"/><circle cx="1195.2" cy="1085.1" r="6.6" fill="none" stroke="#6a7177" stroke-width="1.5"/><rect x="1194.45" y="1084.1999999999998" width="1.5" height="4.3" fill="#6a7177"/><circle cx="1195.2" cy="1082.0" r="1" fill="#6a7177"/><circle cx="1492.5" cy="1085.1" r="6.6" fill="none" stroke="#6a7177" stroke-width="1.5"/><rect x="1491.75" y="1084.1999999999998" width="1.5" height="4.3" fill="#6a7177"/><circle cx="1492.5" cy="1082.0" r="1" fill="#6a7177"/><circle cx="600.6" cy="1217.0" r="6.6" fill="none" stroke="#6a7177" stroke-width="1.5"/><rect x="599.85" y="1216.1" width="1.5" height="4.3" fill="#6a7177"/><circle cx="600.6" cy="1213.9" r="1" fill="#6a7177"/><circle cx="897.9" cy="1217.0" r="6.6" fill="none" stroke="#6a7177" stroke-width="1.5"/><rect x="897.15" y="1216.1" width="1.5" height="4.3" fill="#6a7177"/><circle cx="897.9" cy="1213.9" r="1" fill="#6a7177"/><circle cx="600.6" cy="1413.3999999999999" r="6.6" fill="none" stroke="#6a7177" stroke-width="1.5"/><rect x="599.85" y="1412.4999999999998" width="1.5" height="4.3" fill="#6a7177"/><circle cx="600.6" cy="1410.3" r="1" fill="#6a7177"/><circle cx="897.9" cy="1413.3999999999999" r="6.6" fill="none" stroke="#6a7177" stroke-width="1.5"/><rect x="897.15" y="1412.4999999999998" width="1.5" height="4.3" fill="#6a7177"/><circle cx="897.9" cy="1410.3" r="1" fill="#6a7177"/></svg>
</main>
</body></html>
